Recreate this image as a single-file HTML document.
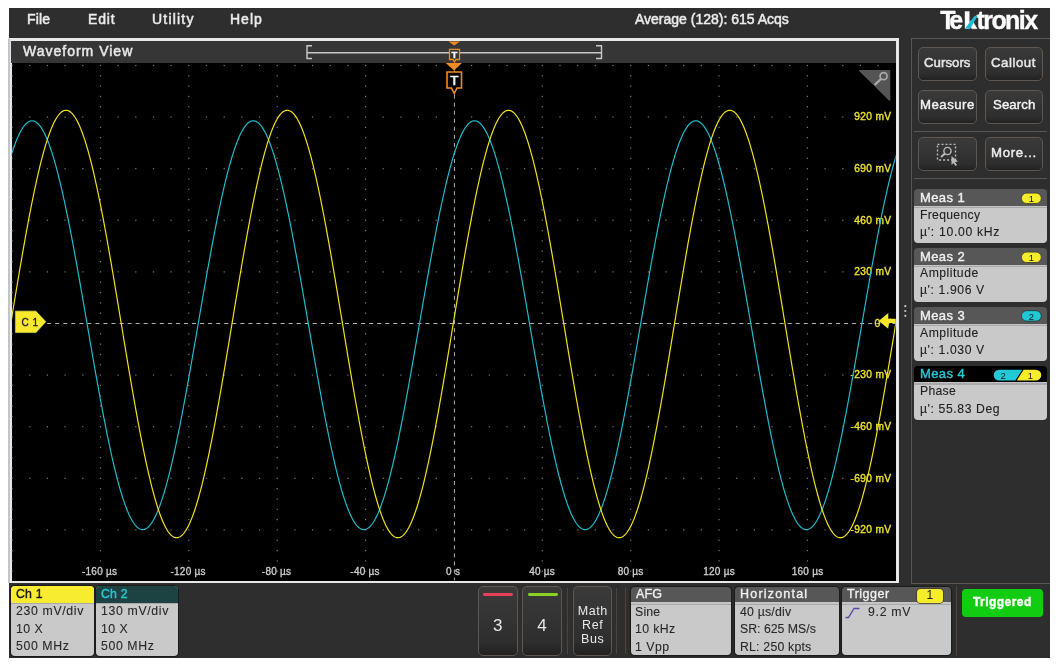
<!DOCTYPE html>
<html><head><meta charset="utf-8">
<style>
*{margin:0;padding:0;box-sizing:border-box}
html,body{width:1056px;height:667px;overflow:hidden;background:#fff;font-family:"Liberation Sans",sans-serif;-webkit-font-smoothing:antialiased}
.t,svg{will-change:transform}
.a{position:absolute}
.t{position:absolute;white-space:nowrap}
.btn{position:absolute;border:1px solid #5e5650;border-radius:5px;background:linear-gradient(#3a3a3a,#2e2e2e 80%,#222)}
.meas{position:absolute;left:914px;width:133px;border-radius:4px;overflow:hidden;background:linear-gradient(#575757 0,#575757 16.9px,#c4c4c4 16.9px,#c4c4c4 18px,#a9a9a9 18px,#a9a9a9 19.2px,#c9c9c9 19.2px)}
.mh{height:16.9px}
.badge{position:absolute;width:20px;height:10.5px;border-radius:5px;background:#f4ea2a;box-shadow:0 0 0 0.7px #3a3a30;color:#222;font-family:"Liberation Serif",serif;font-size:10px;line-height:11px;text-align:center}
.chb{position:absolute;height:70px;background:#c9c9c9;border-radius:4px;overflow:hidden;box-shadow:0 0 0 1.3px #1c1c1c}
.chh{height:18.1px;border-bottom:1.1px solid #a9a9ac}
.vl{fill:#eee22c;font-size:10.2px;text-anchor:end;stroke:#eee22c;stroke-width:0.35px;letter-spacing:0.35px}
.tl{fill:#d0d0d0;font-size:10px;text-anchor:middle;stroke:#d0d0d0;stroke-width:0.3px;letter-spacing:0.25px}
.sep{position:absolute;background:#4d453c}
</style></head><body>
<div class="a" style="left:9px;top:8px;width:1041px;height:650.4px;background:#2e2e2e"></div>

<!-- waveform panel -->
<div class="a" style="left:8px;top:37.8px;width:891.2px;height:545.4px;background:#e8e8ea"></div>
<div class="a" style="left:8px;top:38.5px;width:1.8px;height:544px;background:#c2c4c8"></div>
<div class="a" style="left:11.2px;top:41px;width:884.5px;height:22px;background:#363636"></div>
<div class="a" style="left:11.5px;top:63px;width:884.2px;height:517.7px;background:#000"></div>

<svg class="a" style="left:0;top:0" width="1056" height="667" viewBox="0 0 1056 667">
<defs><clipPath id="gc"><rect x="11.5" y="63" width="884.2" height="517.3"/></clipPath></defs>
<g stroke="#c8c8c8" stroke-width="1.4" fill="none">
<path d="M312,45.8 H307 V58.5 H312 M307,52.7 H601.5 M596,45.8 H601.5 V58.5 H596"/>
</g>
<path d="M448.5,41.4 L460,41.4 L454.2,45.6 Z" fill="#f08a24"/>
<g stroke="#f08a24" stroke-width="1.3" fill="#333">
<path d="M449.5,49.3 H459.5 V59.5 H456 L454.5,62 L453,59.5 H449.5 Z"/>
</g>
<text x="454.5" y="58.2" font-size="9.5" fill="#f4f4f4" stroke="#f4f4f4" stroke-width="0.4" text-anchor="middle" font-weight="bold">T</text>
<g clip-path="url(#gc)">
<g fill="#7a7a7a"><rect x="11.5" y="64.9" width="1.2" height="1.2"/><rect x="29.2" y="64.9" width="1.2" height="1.2"/><rect x="46.8" y="64.9" width="1.2" height="1.2"/><rect x="64.5" y="64.9" width="1.2" height="1.2"/><rect x="82.2" y="64.9" width="1.2" height="1.2"/><rect x="99.9" y="64.9" width="1.2" height="1.2"/><rect x="117.5" y="64.9" width="1.2" height="1.2"/><rect x="135.2" y="64.9" width="1.2" height="1.2"/><rect x="152.9" y="64.9" width="1.2" height="1.2"/><rect x="170.5" y="64.9" width="1.2" height="1.2"/><rect x="188.2" y="64.9" width="1.2" height="1.2"/><rect x="205.9" y="64.9" width="1.2" height="1.2"/><rect x="223.6" y="64.9" width="1.2" height="1.2"/><rect x="241.2" y="64.9" width="1.2" height="1.2"/><rect x="258.9" y="64.9" width="1.2" height="1.2"/><rect x="276.6" y="64.9" width="1.2" height="1.2"/><rect x="294.3" y="64.9" width="1.2" height="1.2"/><rect x="311.9" y="64.9" width="1.2" height="1.2"/><rect x="329.6" y="64.9" width="1.2" height="1.2"/><rect x="347.3" y="64.9" width="1.2" height="1.2"/><rect x="365.0" y="64.9" width="1.2" height="1.2"/><rect x="382.6" y="64.9" width="1.2" height="1.2"/><rect x="400.3" y="64.9" width="1.2" height="1.2"/><rect x="418.0" y="64.9" width="1.2" height="1.2"/><rect x="435.7" y="64.9" width="1.2" height="1.2"/><rect x="471.0" y="64.9" width="1.2" height="1.2"/><rect x="488.7" y="64.9" width="1.2" height="1.2"/><rect x="506.4" y="64.9" width="1.2" height="1.2"/><rect x="524.0" y="64.9" width="1.2" height="1.2"/><rect x="541.7" y="64.9" width="1.2" height="1.2"/><rect x="559.4" y="64.9" width="1.2" height="1.2"/><rect x="577.1" y="64.9" width="1.2" height="1.2"/><rect x="594.7" y="64.9" width="1.2" height="1.2"/><rect x="612.4" y="64.9" width="1.2" height="1.2"/><rect x="630.1" y="64.9" width="1.2" height="1.2"/><rect x="647.8" y="64.9" width="1.2" height="1.2"/><rect x="665.4" y="64.9" width="1.2" height="1.2"/><rect x="683.1" y="64.9" width="1.2" height="1.2"/><rect x="700.8" y="64.9" width="1.2" height="1.2"/><rect x="718.5" y="64.9" width="1.2" height="1.2"/><rect x="736.1" y="64.9" width="1.2" height="1.2"/><rect x="753.8" y="64.9" width="1.2" height="1.2"/><rect x="771.5" y="64.9" width="1.2" height="1.2"/><rect x="789.2" y="64.9" width="1.2" height="1.2"/><rect x="806.8" y="64.9" width="1.2" height="1.2"/><rect x="824.5" y="64.9" width="1.2" height="1.2"/><rect x="842.2" y="64.9" width="1.2" height="1.2"/><rect x="859.9" y="64.9" width="1.2" height="1.2"/><rect x="877.5" y="64.9" width="1.2" height="1.2"/><rect x="11.5" y="116.5" width="1.2" height="1.2"/><rect x="29.2" y="116.5" width="1.2" height="1.2"/><rect x="46.8" y="116.5" width="1.2" height="1.2"/><rect x="64.5" y="116.5" width="1.2" height="1.2"/><rect x="82.2" y="116.5" width="1.2" height="1.2"/><rect x="99.9" y="116.5" width="1.2" height="1.2"/><rect x="117.5" y="116.5" width="1.2" height="1.2"/><rect x="135.2" y="116.5" width="1.2" height="1.2"/><rect x="152.9" y="116.5" width="1.2" height="1.2"/><rect x="170.5" y="116.5" width="1.2" height="1.2"/><rect x="188.2" y="116.5" width="1.2" height="1.2"/><rect x="205.9" y="116.5" width="1.2" height="1.2"/><rect x="223.6" y="116.5" width="1.2" height="1.2"/><rect x="241.2" y="116.5" width="1.2" height="1.2"/><rect x="258.9" y="116.5" width="1.2" height="1.2"/><rect x="276.6" y="116.5" width="1.2" height="1.2"/><rect x="294.3" y="116.5" width="1.2" height="1.2"/><rect x="311.9" y="116.5" width="1.2" height="1.2"/><rect x="329.6" y="116.5" width="1.2" height="1.2"/><rect x="347.3" y="116.5" width="1.2" height="1.2"/><rect x="365.0" y="116.5" width="1.2" height="1.2"/><rect x="382.6" y="116.5" width="1.2" height="1.2"/><rect x="400.3" y="116.5" width="1.2" height="1.2"/><rect x="418.0" y="116.5" width="1.2" height="1.2"/><rect x="435.7" y="116.5" width="1.2" height="1.2"/><rect x="471.0" y="116.5" width="1.2" height="1.2"/><rect x="488.7" y="116.5" width="1.2" height="1.2"/><rect x="506.4" y="116.5" width="1.2" height="1.2"/><rect x="524.0" y="116.5" width="1.2" height="1.2"/><rect x="541.7" y="116.5" width="1.2" height="1.2"/><rect x="559.4" y="116.5" width="1.2" height="1.2"/><rect x="577.1" y="116.5" width="1.2" height="1.2"/><rect x="594.7" y="116.5" width="1.2" height="1.2"/><rect x="612.4" y="116.5" width="1.2" height="1.2"/><rect x="630.1" y="116.5" width="1.2" height="1.2"/><rect x="647.8" y="116.5" width="1.2" height="1.2"/><rect x="665.4" y="116.5" width="1.2" height="1.2"/><rect x="683.1" y="116.5" width="1.2" height="1.2"/><rect x="700.8" y="116.5" width="1.2" height="1.2"/><rect x="718.5" y="116.5" width="1.2" height="1.2"/><rect x="736.1" y="116.5" width="1.2" height="1.2"/><rect x="753.8" y="116.5" width="1.2" height="1.2"/><rect x="771.5" y="116.5" width="1.2" height="1.2"/><rect x="789.2" y="116.5" width="1.2" height="1.2"/><rect x="806.8" y="116.5" width="1.2" height="1.2"/><rect x="824.5" y="116.5" width="1.2" height="1.2"/><rect x="842.2" y="116.5" width="1.2" height="1.2"/><rect x="859.9" y="116.5" width="1.2" height="1.2"/><rect x="877.5" y="116.5" width="1.2" height="1.2"/><rect x="11.5" y="168.1" width="1.2" height="1.2"/><rect x="29.2" y="168.1" width="1.2" height="1.2"/><rect x="46.8" y="168.1" width="1.2" height="1.2"/><rect x="64.5" y="168.1" width="1.2" height="1.2"/><rect x="82.2" y="168.1" width="1.2" height="1.2"/><rect x="99.9" y="168.1" width="1.2" height="1.2"/><rect x="117.5" y="168.1" width="1.2" height="1.2"/><rect x="135.2" y="168.1" width="1.2" height="1.2"/><rect x="152.9" y="168.1" width="1.2" height="1.2"/><rect x="170.5" y="168.1" width="1.2" height="1.2"/><rect x="188.2" y="168.1" width="1.2" height="1.2"/><rect x="205.9" y="168.1" width="1.2" height="1.2"/><rect x="223.6" y="168.1" width="1.2" height="1.2"/><rect x="241.2" y="168.1" width="1.2" height="1.2"/><rect x="258.9" y="168.1" width="1.2" height="1.2"/><rect x="276.6" y="168.1" width="1.2" height="1.2"/><rect x="294.3" y="168.1" width="1.2" height="1.2"/><rect x="311.9" y="168.1" width="1.2" height="1.2"/><rect x="329.6" y="168.1" width="1.2" height="1.2"/><rect x="347.3" y="168.1" width="1.2" height="1.2"/><rect x="365.0" y="168.1" width="1.2" height="1.2"/><rect x="382.6" y="168.1" width="1.2" height="1.2"/><rect x="400.3" y="168.1" width="1.2" height="1.2"/><rect x="418.0" y="168.1" width="1.2" height="1.2"/><rect x="435.7" y="168.1" width="1.2" height="1.2"/><rect x="471.0" y="168.1" width="1.2" height="1.2"/><rect x="488.7" y="168.1" width="1.2" height="1.2"/><rect x="506.4" y="168.1" width="1.2" height="1.2"/><rect x="524.0" y="168.1" width="1.2" height="1.2"/><rect x="541.7" y="168.1" width="1.2" height="1.2"/><rect x="559.4" y="168.1" width="1.2" height="1.2"/><rect x="577.1" y="168.1" width="1.2" height="1.2"/><rect x="594.7" y="168.1" width="1.2" height="1.2"/><rect x="612.4" y="168.1" width="1.2" height="1.2"/><rect x="630.1" y="168.1" width="1.2" height="1.2"/><rect x="647.8" y="168.1" width="1.2" height="1.2"/><rect x="665.4" y="168.1" width="1.2" height="1.2"/><rect x="683.1" y="168.1" width="1.2" height="1.2"/><rect x="700.8" y="168.1" width="1.2" height="1.2"/><rect x="718.5" y="168.1" width="1.2" height="1.2"/><rect x="736.1" y="168.1" width="1.2" height="1.2"/><rect x="753.8" y="168.1" width="1.2" height="1.2"/><rect x="771.5" y="168.1" width="1.2" height="1.2"/><rect x="789.2" y="168.1" width="1.2" height="1.2"/><rect x="806.8" y="168.1" width="1.2" height="1.2"/><rect x="824.5" y="168.1" width="1.2" height="1.2"/><rect x="842.2" y="168.1" width="1.2" height="1.2"/><rect x="859.9" y="168.1" width="1.2" height="1.2"/><rect x="877.5" y="168.1" width="1.2" height="1.2"/><rect x="11.5" y="219.7" width="1.2" height="1.2"/><rect x="29.2" y="219.7" width="1.2" height="1.2"/><rect x="46.8" y="219.7" width="1.2" height="1.2"/><rect x="64.5" y="219.7" width="1.2" height="1.2"/><rect x="82.2" y="219.7" width="1.2" height="1.2"/><rect x="99.9" y="219.7" width="1.2" height="1.2"/><rect x="117.5" y="219.7" width="1.2" height="1.2"/><rect x="135.2" y="219.7" width="1.2" height="1.2"/><rect x="152.9" y="219.7" width="1.2" height="1.2"/><rect x="170.5" y="219.7" width="1.2" height="1.2"/><rect x="188.2" y="219.7" width="1.2" height="1.2"/><rect x="205.9" y="219.7" width="1.2" height="1.2"/><rect x="223.6" y="219.7" width="1.2" height="1.2"/><rect x="241.2" y="219.7" width="1.2" height="1.2"/><rect x="258.9" y="219.7" width="1.2" height="1.2"/><rect x="276.6" y="219.7" width="1.2" height="1.2"/><rect x="294.3" y="219.7" width="1.2" height="1.2"/><rect x="311.9" y="219.7" width="1.2" height="1.2"/><rect x="329.6" y="219.7" width="1.2" height="1.2"/><rect x="347.3" y="219.7" width="1.2" height="1.2"/><rect x="365.0" y="219.7" width="1.2" height="1.2"/><rect x="382.6" y="219.7" width="1.2" height="1.2"/><rect x="400.3" y="219.7" width="1.2" height="1.2"/><rect x="418.0" y="219.7" width="1.2" height="1.2"/><rect x="435.7" y="219.7" width="1.2" height="1.2"/><rect x="471.0" y="219.7" width="1.2" height="1.2"/><rect x="488.7" y="219.7" width="1.2" height="1.2"/><rect x="506.4" y="219.7" width="1.2" height="1.2"/><rect x="524.0" y="219.7" width="1.2" height="1.2"/><rect x="541.7" y="219.7" width="1.2" height="1.2"/><rect x="559.4" y="219.7" width="1.2" height="1.2"/><rect x="577.1" y="219.7" width="1.2" height="1.2"/><rect x="594.7" y="219.7" width="1.2" height="1.2"/><rect x="612.4" y="219.7" width="1.2" height="1.2"/><rect x="630.1" y="219.7" width="1.2" height="1.2"/><rect x="647.8" y="219.7" width="1.2" height="1.2"/><rect x="665.4" y="219.7" width="1.2" height="1.2"/><rect x="683.1" y="219.7" width="1.2" height="1.2"/><rect x="700.8" y="219.7" width="1.2" height="1.2"/><rect x="718.5" y="219.7" width="1.2" height="1.2"/><rect x="736.1" y="219.7" width="1.2" height="1.2"/><rect x="753.8" y="219.7" width="1.2" height="1.2"/><rect x="771.5" y="219.7" width="1.2" height="1.2"/><rect x="789.2" y="219.7" width="1.2" height="1.2"/><rect x="806.8" y="219.7" width="1.2" height="1.2"/><rect x="824.5" y="219.7" width="1.2" height="1.2"/><rect x="842.2" y="219.7" width="1.2" height="1.2"/><rect x="859.9" y="219.7" width="1.2" height="1.2"/><rect x="877.5" y="219.7" width="1.2" height="1.2"/><rect x="11.5" y="271.3" width="1.2" height="1.2"/><rect x="29.2" y="271.3" width="1.2" height="1.2"/><rect x="46.8" y="271.3" width="1.2" height="1.2"/><rect x="64.5" y="271.3" width="1.2" height="1.2"/><rect x="82.2" y="271.3" width="1.2" height="1.2"/><rect x="99.9" y="271.3" width="1.2" height="1.2"/><rect x="117.5" y="271.3" width="1.2" height="1.2"/><rect x="135.2" y="271.3" width="1.2" height="1.2"/><rect x="152.9" y="271.3" width="1.2" height="1.2"/><rect x="170.5" y="271.3" width="1.2" height="1.2"/><rect x="188.2" y="271.3" width="1.2" height="1.2"/><rect x="205.9" y="271.3" width="1.2" height="1.2"/><rect x="223.6" y="271.3" width="1.2" height="1.2"/><rect x="241.2" y="271.3" width="1.2" height="1.2"/><rect x="258.9" y="271.3" width="1.2" height="1.2"/><rect x="276.6" y="271.3" width="1.2" height="1.2"/><rect x="294.3" y="271.3" width="1.2" height="1.2"/><rect x="311.9" y="271.3" width="1.2" height="1.2"/><rect x="329.6" y="271.3" width="1.2" height="1.2"/><rect x="347.3" y="271.3" width="1.2" height="1.2"/><rect x="365.0" y="271.3" width="1.2" height="1.2"/><rect x="382.6" y="271.3" width="1.2" height="1.2"/><rect x="400.3" y="271.3" width="1.2" height="1.2"/><rect x="418.0" y="271.3" width="1.2" height="1.2"/><rect x="435.7" y="271.3" width="1.2" height="1.2"/><rect x="471.0" y="271.3" width="1.2" height="1.2"/><rect x="488.7" y="271.3" width="1.2" height="1.2"/><rect x="506.4" y="271.3" width="1.2" height="1.2"/><rect x="524.0" y="271.3" width="1.2" height="1.2"/><rect x="541.7" y="271.3" width="1.2" height="1.2"/><rect x="559.4" y="271.3" width="1.2" height="1.2"/><rect x="577.1" y="271.3" width="1.2" height="1.2"/><rect x="594.7" y="271.3" width="1.2" height="1.2"/><rect x="612.4" y="271.3" width="1.2" height="1.2"/><rect x="630.1" y="271.3" width="1.2" height="1.2"/><rect x="647.8" y="271.3" width="1.2" height="1.2"/><rect x="665.4" y="271.3" width="1.2" height="1.2"/><rect x="683.1" y="271.3" width="1.2" height="1.2"/><rect x="700.8" y="271.3" width="1.2" height="1.2"/><rect x="718.5" y="271.3" width="1.2" height="1.2"/><rect x="736.1" y="271.3" width="1.2" height="1.2"/><rect x="753.8" y="271.3" width="1.2" height="1.2"/><rect x="771.5" y="271.3" width="1.2" height="1.2"/><rect x="789.2" y="271.3" width="1.2" height="1.2"/><rect x="806.8" y="271.3" width="1.2" height="1.2"/><rect x="824.5" y="271.3" width="1.2" height="1.2"/><rect x="842.2" y="271.3" width="1.2" height="1.2"/><rect x="859.9" y="271.3" width="1.2" height="1.2"/><rect x="877.5" y="271.3" width="1.2" height="1.2"/><rect x="11.5" y="374.5" width="1.2" height="1.2"/><rect x="29.2" y="374.5" width="1.2" height="1.2"/><rect x="46.8" y="374.5" width="1.2" height="1.2"/><rect x="64.5" y="374.5" width="1.2" height="1.2"/><rect x="82.2" y="374.5" width="1.2" height="1.2"/><rect x="99.9" y="374.5" width="1.2" height="1.2"/><rect x="117.5" y="374.5" width="1.2" height="1.2"/><rect x="135.2" y="374.5" width="1.2" height="1.2"/><rect x="152.9" y="374.5" width="1.2" height="1.2"/><rect x="170.5" y="374.5" width="1.2" height="1.2"/><rect x="188.2" y="374.5" width="1.2" height="1.2"/><rect x="205.9" y="374.5" width="1.2" height="1.2"/><rect x="223.6" y="374.5" width="1.2" height="1.2"/><rect x="241.2" y="374.5" width="1.2" height="1.2"/><rect x="258.9" y="374.5" width="1.2" height="1.2"/><rect x="276.6" y="374.5" width="1.2" height="1.2"/><rect x="294.3" y="374.5" width="1.2" height="1.2"/><rect x="311.9" y="374.5" width="1.2" height="1.2"/><rect x="329.6" y="374.5" width="1.2" height="1.2"/><rect x="347.3" y="374.5" width="1.2" height="1.2"/><rect x="365.0" y="374.5" width="1.2" height="1.2"/><rect x="382.6" y="374.5" width="1.2" height="1.2"/><rect x="400.3" y="374.5" width="1.2" height="1.2"/><rect x="418.0" y="374.5" width="1.2" height="1.2"/><rect x="435.7" y="374.5" width="1.2" height="1.2"/><rect x="471.0" y="374.5" width="1.2" height="1.2"/><rect x="488.7" y="374.5" width="1.2" height="1.2"/><rect x="506.4" y="374.5" width="1.2" height="1.2"/><rect x="524.0" y="374.5" width="1.2" height="1.2"/><rect x="541.7" y="374.5" width="1.2" height="1.2"/><rect x="559.4" y="374.5" width="1.2" height="1.2"/><rect x="577.1" y="374.5" width="1.2" height="1.2"/><rect x="594.7" y="374.5" width="1.2" height="1.2"/><rect x="612.4" y="374.5" width="1.2" height="1.2"/><rect x="630.1" y="374.5" width="1.2" height="1.2"/><rect x="647.8" y="374.5" width="1.2" height="1.2"/><rect x="665.4" y="374.5" width="1.2" height="1.2"/><rect x="683.1" y="374.5" width="1.2" height="1.2"/><rect x="700.8" y="374.5" width="1.2" height="1.2"/><rect x="718.5" y="374.5" width="1.2" height="1.2"/><rect x="736.1" y="374.5" width="1.2" height="1.2"/><rect x="753.8" y="374.5" width="1.2" height="1.2"/><rect x="771.5" y="374.5" width="1.2" height="1.2"/><rect x="789.2" y="374.5" width="1.2" height="1.2"/><rect x="806.8" y="374.5" width="1.2" height="1.2"/><rect x="824.5" y="374.5" width="1.2" height="1.2"/><rect x="842.2" y="374.5" width="1.2" height="1.2"/><rect x="859.9" y="374.5" width="1.2" height="1.2"/><rect x="877.5" y="374.5" width="1.2" height="1.2"/><rect x="11.5" y="426.1" width="1.2" height="1.2"/><rect x="29.2" y="426.1" width="1.2" height="1.2"/><rect x="46.8" y="426.1" width="1.2" height="1.2"/><rect x="64.5" y="426.1" width="1.2" height="1.2"/><rect x="82.2" y="426.1" width="1.2" height="1.2"/><rect x="99.9" y="426.1" width="1.2" height="1.2"/><rect x="117.5" y="426.1" width="1.2" height="1.2"/><rect x="135.2" y="426.1" width="1.2" height="1.2"/><rect x="152.9" y="426.1" width="1.2" height="1.2"/><rect x="170.5" y="426.1" width="1.2" height="1.2"/><rect x="188.2" y="426.1" width="1.2" height="1.2"/><rect x="205.9" y="426.1" width="1.2" height="1.2"/><rect x="223.6" y="426.1" width="1.2" height="1.2"/><rect x="241.2" y="426.1" width="1.2" height="1.2"/><rect x="258.9" y="426.1" width="1.2" height="1.2"/><rect x="276.6" y="426.1" width="1.2" height="1.2"/><rect x="294.3" y="426.1" width="1.2" height="1.2"/><rect x="311.9" y="426.1" width="1.2" height="1.2"/><rect x="329.6" y="426.1" width="1.2" height="1.2"/><rect x="347.3" y="426.1" width="1.2" height="1.2"/><rect x="365.0" y="426.1" width="1.2" height="1.2"/><rect x="382.6" y="426.1" width="1.2" height="1.2"/><rect x="400.3" y="426.1" width="1.2" height="1.2"/><rect x="418.0" y="426.1" width="1.2" height="1.2"/><rect x="435.7" y="426.1" width="1.2" height="1.2"/><rect x="471.0" y="426.1" width="1.2" height="1.2"/><rect x="488.7" y="426.1" width="1.2" height="1.2"/><rect x="506.4" y="426.1" width="1.2" height="1.2"/><rect x="524.0" y="426.1" width="1.2" height="1.2"/><rect x="541.7" y="426.1" width="1.2" height="1.2"/><rect x="559.4" y="426.1" width="1.2" height="1.2"/><rect x="577.1" y="426.1" width="1.2" height="1.2"/><rect x="594.7" y="426.1" width="1.2" height="1.2"/><rect x="612.4" y="426.1" width="1.2" height="1.2"/><rect x="630.1" y="426.1" width="1.2" height="1.2"/><rect x="647.8" y="426.1" width="1.2" height="1.2"/><rect x="665.4" y="426.1" width="1.2" height="1.2"/><rect x="683.1" y="426.1" width="1.2" height="1.2"/><rect x="700.8" y="426.1" width="1.2" height="1.2"/><rect x="718.5" y="426.1" width="1.2" height="1.2"/><rect x="736.1" y="426.1" width="1.2" height="1.2"/><rect x="753.8" y="426.1" width="1.2" height="1.2"/><rect x="771.5" y="426.1" width="1.2" height="1.2"/><rect x="789.2" y="426.1" width="1.2" height="1.2"/><rect x="806.8" y="426.1" width="1.2" height="1.2"/><rect x="824.5" y="426.1" width="1.2" height="1.2"/><rect x="842.2" y="426.1" width="1.2" height="1.2"/><rect x="859.9" y="426.1" width="1.2" height="1.2"/><rect x="877.5" y="426.1" width="1.2" height="1.2"/><rect x="11.5" y="477.7" width="1.2" height="1.2"/><rect x="29.2" y="477.7" width="1.2" height="1.2"/><rect x="46.8" y="477.7" width="1.2" height="1.2"/><rect x="64.5" y="477.7" width="1.2" height="1.2"/><rect x="82.2" y="477.7" width="1.2" height="1.2"/><rect x="99.9" y="477.7" width="1.2" height="1.2"/><rect x="117.5" y="477.7" width="1.2" height="1.2"/><rect x="135.2" y="477.7" width="1.2" height="1.2"/><rect x="152.9" y="477.7" width="1.2" height="1.2"/><rect x="170.5" y="477.7" width="1.2" height="1.2"/><rect x="188.2" y="477.7" width="1.2" height="1.2"/><rect x="205.9" y="477.7" width="1.2" height="1.2"/><rect x="223.6" y="477.7" width="1.2" height="1.2"/><rect x="241.2" y="477.7" width="1.2" height="1.2"/><rect x="258.9" y="477.7" width="1.2" height="1.2"/><rect x="276.6" y="477.7" width="1.2" height="1.2"/><rect x="294.3" y="477.7" width="1.2" height="1.2"/><rect x="311.9" y="477.7" width="1.2" height="1.2"/><rect x="329.6" y="477.7" width="1.2" height="1.2"/><rect x="347.3" y="477.7" width="1.2" height="1.2"/><rect x="365.0" y="477.7" width="1.2" height="1.2"/><rect x="382.6" y="477.7" width="1.2" height="1.2"/><rect x="400.3" y="477.7" width="1.2" height="1.2"/><rect x="418.0" y="477.7" width="1.2" height="1.2"/><rect x="435.7" y="477.7" width="1.2" height="1.2"/><rect x="471.0" y="477.7" width="1.2" height="1.2"/><rect x="488.7" y="477.7" width="1.2" height="1.2"/><rect x="506.4" y="477.7" width="1.2" height="1.2"/><rect x="524.0" y="477.7" width="1.2" height="1.2"/><rect x="541.7" y="477.7" width="1.2" height="1.2"/><rect x="559.4" y="477.7" width="1.2" height="1.2"/><rect x="577.1" y="477.7" width="1.2" height="1.2"/><rect x="594.7" y="477.7" width="1.2" height="1.2"/><rect x="612.4" y="477.7" width="1.2" height="1.2"/><rect x="630.1" y="477.7" width="1.2" height="1.2"/><rect x="647.8" y="477.7" width="1.2" height="1.2"/><rect x="665.4" y="477.7" width="1.2" height="1.2"/><rect x="683.1" y="477.7" width="1.2" height="1.2"/><rect x="700.8" y="477.7" width="1.2" height="1.2"/><rect x="718.5" y="477.7" width="1.2" height="1.2"/><rect x="736.1" y="477.7" width="1.2" height="1.2"/><rect x="753.8" y="477.7" width="1.2" height="1.2"/><rect x="771.5" y="477.7" width="1.2" height="1.2"/><rect x="789.2" y="477.7" width="1.2" height="1.2"/><rect x="806.8" y="477.7" width="1.2" height="1.2"/><rect x="824.5" y="477.7" width="1.2" height="1.2"/><rect x="842.2" y="477.7" width="1.2" height="1.2"/><rect x="859.9" y="477.7" width="1.2" height="1.2"/><rect x="877.5" y="477.7" width="1.2" height="1.2"/><rect x="11.5" y="529.3" width="1.2" height="1.2"/><rect x="29.2" y="529.3" width="1.2" height="1.2"/><rect x="46.8" y="529.3" width="1.2" height="1.2"/><rect x="64.5" y="529.3" width="1.2" height="1.2"/><rect x="82.2" y="529.3" width="1.2" height="1.2"/><rect x="99.9" y="529.3" width="1.2" height="1.2"/><rect x="117.5" y="529.3" width="1.2" height="1.2"/><rect x="135.2" y="529.3" width="1.2" height="1.2"/><rect x="152.9" y="529.3" width="1.2" height="1.2"/><rect x="170.5" y="529.3" width="1.2" height="1.2"/><rect x="188.2" y="529.3" width="1.2" height="1.2"/><rect x="205.9" y="529.3" width="1.2" height="1.2"/><rect x="223.6" y="529.3" width="1.2" height="1.2"/><rect x="241.2" y="529.3" width="1.2" height="1.2"/><rect x="258.9" y="529.3" width="1.2" height="1.2"/><rect x="276.6" y="529.3" width="1.2" height="1.2"/><rect x="294.3" y="529.3" width="1.2" height="1.2"/><rect x="311.9" y="529.3" width="1.2" height="1.2"/><rect x="329.6" y="529.3" width="1.2" height="1.2"/><rect x="347.3" y="529.3" width="1.2" height="1.2"/><rect x="365.0" y="529.3" width="1.2" height="1.2"/><rect x="382.6" y="529.3" width="1.2" height="1.2"/><rect x="400.3" y="529.3" width="1.2" height="1.2"/><rect x="418.0" y="529.3" width="1.2" height="1.2"/><rect x="435.7" y="529.3" width="1.2" height="1.2"/><rect x="471.0" y="529.3" width="1.2" height="1.2"/><rect x="488.7" y="529.3" width="1.2" height="1.2"/><rect x="506.4" y="529.3" width="1.2" height="1.2"/><rect x="524.0" y="529.3" width="1.2" height="1.2"/><rect x="541.7" y="529.3" width="1.2" height="1.2"/><rect x="559.4" y="529.3" width="1.2" height="1.2"/><rect x="577.1" y="529.3" width="1.2" height="1.2"/><rect x="594.7" y="529.3" width="1.2" height="1.2"/><rect x="612.4" y="529.3" width="1.2" height="1.2"/><rect x="630.1" y="529.3" width="1.2" height="1.2"/><rect x="647.8" y="529.3" width="1.2" height="1.2"/><rect x="665.4" y="529.3" width="1.2" height="1.2"/><rect x="683.1" y="529.3" width="1.2" height="1.2"/><rect x="700.8" y="529.3" width="1.2" height="1.2"/><rect x="718.5" y="529.3" width="1.2" height="1.2"/><rect x="736.1" y="529.3" width="1.2" height="1.2"/><rect x="753.8" y="529.3" width="1.2" height="1.2"/><rect x="771.5" y="529.3" width="1.2" height="1.2"/><rect x="789.2" y="529.3" width="1.2" height="1.2"/><rect x="806.8" y="529.3" width="1.2" height="1.2"/><rect x="824.5" y="529.3" width="1.2" height="1.2"/><rect x="842.2" y="529.3" width="1.2" height="1.2"/><rect x="859.9" y="529.3" width="1.2" height="1.2"/><rect x="877.5" y="529.3" width="1.2" height="1.2"/><rect x="11.5" y="580.9" width="1.2" height="1.2"/><rect x="29.2" y="580.9" width="1.2" height="1.2"/><rect x="46.8" y="580.9" width="1.2" height="1.2"/><rect x="64.5" y="580.9" width="1.2" height="1.2"/><rect x="82.2" y="580.9" width="1.2" height="1.2"/><rect x="99.9" y="580.9" width="1.2" height="1.2"/><rect x="117.5" y="580.9" width="1.2" height="1.2"/><rect x="135.2" y="580.9" width="1.2" height="1.2"/><rect x="152.9" y="580.9" width="1.2" height="1.2"/><rect x="170.5" y="580.9" width="1.2" height="1.2"/><rect x="188.2" y="580.9" width="1.2" height="1.2"/><rect x="205.9" y="580.9" width="1.2" height="1.2"/><rect x="223.6" y="580.9" width="1.2" height="1.2"/><rect x="241.2" y="580.9" width="1.2" height="1.2"/><rect x="258.9" y="580.9" width="1.2" height="1.2"/><rect x="276.6" y="580.9" width="1.2" height="1.2"/><rect x="294.3" y="580.9" width="1.2" height="1.2"/><rect x="311.9" y="580.9" width="1.2" height="1.2"/><rect x="329.6" y="580.9" width="1.2" height="1.2"/><rect x="347.3" y="580.9" width="1.2" height="1.2"/><rect x="365.0" y="580.9" width="1.2" height="1.2"/><rect x="382.6" y="580.9" width="1.2" height="1.2"/><rect x="400.3" y="580.9" width="1.2" height="1.2"/><rect x="418.0" y="580.9" width="1.2" height="1.2"/><rect x="435.7" y="580.9" width="1.2" height="1.2"/><rect x="471.0" y="580.9" width="1.2" height="1.2"/><rect x="488.7" y="580.9" width="1.2" height="1.2"/><rect x="506.4" y="580.9" width="1.2" height="1.2"/><rect x="524.0" y="580.9" width="1.2" height="1.2"/><rect x="541.7" y="580.9" width="1.2" height="1.2"/><rect x="559.4" y="580.9" width="1.2" height="1.2"/><rect x="577.1" y="580.9" width="1.2" height="1.2"/><rect x="594.7" y="580.9" width="1.2" height="1.2"/><rect x="612.4" y="580.9" width="1.2" height="1.2"/><rect x="630.1" y="580.9" width="1.2" height="1.2"/><rect x="647.8" y="580.9" width="1.2" height="1.2"/><rect x="665.4" y="580.9" width="1.2" height="1.2"/><rect x="683.1" y="580.9" width="1.2" height="1.2"/><rect x="700.8" y="580.9" width="1.2" height="1.2"/><rect x="718.5" y="580.9" width="1.2" height="1.2"/><rect x="736.1" y="580.9" width="1.2" height="1.2"/><rect x="753.8" y="580.9" width="1.2" height="1.2"/><rect x="771.5" y="580.9" width="1.2" height="1.2"/><rect x="789.2" y="580.9" width="1.2" height="1.2"/><rect x="806.8" y="580.9" width="1.2" height="1.2"/><rect x="824.5" y="580.9" width="1.2" height="1.2"/><rect x="842.2" y="580.9" width="1.2" height="1.2"/><rect x="859.9" y="580.9" width="1.2" height="1.2"/><rect x="877.5" y="580.9" width="1.2" height="1.2"/><rect x="11.5" y="75.2" width="1.2" height="1.2"/><rect x="11.5" y="85.5" width="1.2" height="1.2"/><rect x="11.5" y="95.8" width="1.2" height="1.2"/><rect x="11.5" y="106.1" width="1.2" height="1.2"/><rect x="11.5" y="126.8" width="1.2" height="1.2"/><rect x="11.5" y="137.1" width="1.2" height="1.2"/><rect x="11.5" y="147.4" width="1.2" height="1.2"/><rect x="11.5" y="157.7" width="1.2" height="1.2"/><rect x="11.5" y="178.4" width="1.2" height="1.2"/><rect x="11.5" y="188.7" width="1.2" height="1.2"/><rect x="11.5" y="199.0" width="1.2" height="1.2"/><rect x="11.5" y="209.4" width="1.2" height="1.2"/><rect x="11.5" y="230.0" width="1.2" height="1.2"/><rect x="11.5" y="240.3" width="1.2" height="1.2"/><rect x="11.5" y="250.6" width="1.2" height="1.2"/><rect x="11.5" y="261.0" width="1.2" height="1.2"/><rect x="11.5" y="281.6" width="1.2" height="1.2"/><rect x="11.5" y="291.9" width="1.2" height="1.2"/><rect x="11.5" y="302.3" width="1.2" height="1.2"/><rect x="11.5" y="312.6" width="1.2" height="1.2"/><rect x="11.5" y="333.2" width="1.2" height="1.2"/><rect x="11.5" y="343.5" width="1.2" height="1.2"/><rect x="11.5" y="353.9" width="1.2" height="1.2"/><rect x="11.5" y="364.2" width="1.2" height="1.2"/><rect x="11.5" y="384.8" width="1.2" height="1.2"/><rect x="11.5" y="395.2" width="1.2" height="1.2"/><rect x="11.5" y="405.5" width="1.2" height="1.2"/><rect x="11.5" y="415.8" width="1.2" height="1.2"/><rect x="11.5" y="436.4" width="1.2" height="1.2"/><rect x="11.5" y="446.8" width="1.2" height="1.2"/><rect x="11.5" y="457.1" width="1.2" height="1.2"/><rect x="11.5" y="467.4" width="1.2" height="1.2"/><rect x="11.5" y="488.1" width="1.2" height="1.2"/><rect x="11.5" y="498.4" width="1.2" height="1.2"/><rect x="11.5" y="508.7" width="1.2" height="1.2"/><rect x="11.5" y="519.0" width="1.2" height="1.2"/><rect x="11.5" y="539.7" width="1.2" height="1.2"/><rect x="11.5" y="550.0" width="1.2" height="1.2"/><rect x="11.5" y="560.3" width="1.2" height="1.2"/><rect x="11.5" y="570.6" width="1.2" height="1.2"/><rect x="99.9" y="75.2" width="1.2" height="1.2"/><rect x="99.9" y="85.5" width="1.2" height="1.2"/><rect x="99.9" y="95.8" width="1.2" height="1.2"/><rect x="99.9" y="106.1" width="1.2" height="1.2"/><rect x="99.9" y="126.8" width="1.2" height="1.2"/><rect x="99.9" y="137.1" width="1.2" height="1.2"/><rect x="99.9" y="147.4" width="1.2" height="1.2"/><rect x="99.9" y="157.7" width="1.2" height="1.2"/><rect x="99.9" y="178.4" width="1.2" height="1.2"/><rect x="99.9" y="188.7" width="1.2" height="1.2"/><rect x="99.9" y="199.0" width="1.2" height="1.2"/><rect x="99.9" y="209.4" width="1.2" height="1.2"/><rect x="99.9" y="230.0" width="1.2" height="1.2"/><rect x="99.9" y="240.3" width="1.2" height="1.2"/><rect x="99.9" y="250.6" width="1.2" height="1.2"/><rect x="99.9" y="261.0" width="1.2" height="1.2"/><rect x="99.9" y="281.6" width="1.2" height="1.2"/><rect x="99.9" y="291.9" width="1.2" height="1.2"/><rect x="99.9" y="302.3" width="1.2" height="1.2"/><rect x="99.9" y="312.6" width="1.2" height="1.2"/><rect x="99.9" y="333.2" width="1.2" height="1.2"/><rect x="99.9" y="343.5" width="1.2" height="1.2"/><rect x="99.9" y="353.9" width="1.2" height="1.2"/><rect x="99.9" y="364.2" width="1.2" height="1.2"/><rect x="99.9" y="384.8" width="1.2" height="1.2"/><rect x="99.9" y="395.2" width="1.2" height="1.2"/><rect x="99.9" y="405.5" width="1.2" height="1.2"/><rect x="99.9" y="415.8" width="1.2" height="1.2"/><rect x="99.9" y="436.4" width="1.2" height="1.2"/><rect x="99.9" y="446.8" width="1.2" height="1.2"/><rect x="99.9" y="457.1" width="1.2" height="1.2"/><rect x="99.9" y="467.4" width="1.2" height="1.2"/><rect x="99.9" y="488.1" width="1.2" height="1.2"/><rect x="99.9" y="498.4" width="1.2" height="1.2"/><rect x="99.9" y="508.7" width="1.2" height="1.2"/><rect x="99.9" y="519.0" width="1.2" height="1.2"/><rect x="99.9" y="539.7" width="1.2" height="1.2"/><rect x="99.9" y="550.0" width="1.2" height="1.2"/><rect x="99.9" y="560.3" width="1.2" height="1.2"/><rect x="99.9" y="570.6" width="1.2" height="1.2"/><rect x="188.2" y="75.2" width="1.2" height="1.2"/><rect x="188.2" y="85.5" width="1.2" height="1.2"/><rect x="188.2" y="95.8" width="1.2" height="1.2"/><rect x="188.2" y="106.1" width="1.2" height="1.2"/><rect x="188.2" y="126.8" width="1.2" height="1.2"/><rect x="188.2" y="137.1" width="1.2" height="1.2"/><rect x="188.2" y="147.4" width="1.2" height="1.2"/><rect x="188.2" y="157.7" width="1.2" height="1.2"/><rect x="188.2" y="178.4" width="1.2" height="1.2"/><rect x="188.2" y="188.7" width="1.2" height="1.2"/><rect x="188.2" y="199.0" width="1.2" height="1.2"/><rect x="188.2" y="209.4" width="1.2" height="1.2"/><rect x="188.2" y="230.0" width="1.2" height="1.2"/><rect x="188.2" y="240.3" width="1.2" height="1.2"/><rect x="188.2" y="250.6" width="1.2" height="1.2"/><rect x="188.2" y="261.0" width="1.2" height="1.2"/><rect x="188.2" y="281.6" width="1.2" height="1.2"/><rect x="188.2" y="291.9" width="1.2" height="1.2"/><rect x="188.2" y="302.3" width="1.2" height="1.2"/><rect x="188.2" y="312.6" width="1.2" height="1.2"/><rect x="188.2" y="333.2" width="1.2" height="1.2"/><rect x="188.2" y="343.5" width="1.2" height="1.2"/><rect x="188.2" y="353.9" width="1.2" height="1.2"/><rect x="188.2" y="364.2" width="1.2" height="1.2"/><rect x="188.2" y="384.8" width="1.2" height="1.2"/><rect x="188.2" y="395.2" width="1.2" height="1.2"/><rect x="188.2" y="405.5" width="1.2" height="1.2"/><rect x="188.2" y="415.8" width="1.2" height="1.2"/><rect x="188.2" y="436.4" width="1.2" height="1.2"/><rect x="188.2" y="446.8" width="1.2" height="1.2"/><rect x="188.2" y="457.1" width="1.2" height="1.2"/><rect x="188.2" y="467.4" width="1.2" height="1.2"/><rect x="188.2" y="488.1" width="1.2" height="1.2"/><rect x="188.2" y="498.4" width="1.2" height="1.2"/><rect x="188.2" y="508.7" width="1.2" height="1.2"/><rect x="188.2" y="519.0" width="1.2" height="1.2"/><rect x="188.2" y="539.7" width="1.2" height="1.2"/><rect x="188.2" y="550.0" width="1.2" height="1.2"/><rect x="188.2" y="560.3" width="1.2" height="1.2"/><rect x="188.2" y="570.6" width="1.2" height="1.2"/><rect x="276.6" y="75.2" width="1.2" height="1.2"/><rect x="276.6" y="85.5" width="1.2" height="1.2"/><rect x="276.6" y="95.8" width="1.2" height="1.2"/><rect x="276.6" y="106.1" width="1.2" height="1.2"/><rect x="276.6" y="126.8" width="1.2" height="1.2"/><rect x="276.6" y="137.1" width="1.2" height="1.2"/><rect x="276.6" y="147.4" width="1.2" height="1.2"/><rect x="276.6" y="157.7" width="1.2" height="1.2"/><rect x="276.6" y="178.4" width="1.2" height="1.2"/><rect x="276.6" y="188.7" width="1.2" height="1.2"/><rect x="276.6" y="199.0" width="1.2" height="1.2"/><rect x="276.6" y="209.4" width="1.2" height="1.2"/><rect x="276.6" y="230.0" width="1.2" height="1.2"/><rect x="276.6" y="240.3" width="1.2" height="1.2"/><rect x="276.6" y="250.6" width="1.2" height="1.2"/><rect x="276.6" y="261.0" width="1.2" height="1.2"/><rect x="276.6" y="281.6" width="1.2" height="1.2"/><rect x="276.6" y="291.9" width="1.2" height="1.2"/><rect x="276.6" y="302.3" width="1.2" height="1.2"/><rect x="276.6" y="312.6" width="1.2" height="1.2"/><rect x="276.6" y="333.2" width="1.2" height="1.2"/><rect x="276.6" y="343.5" width="1.2" height="1.2"/><rect x="276.6" y="353.9" width="1.2" height="1.2"/><rect x="276.6" y="364.2" width="1.2" height="1.2"/><rect x="276.6" y="384.8" width="1.2" height="1.2"/><rect x="276.6" y="395.2" width="1.2" height="1.2"/><rect x="276.6" y="405.5" width="1.2" height="1.2"/><rect x="276.6" y="415.8" width="1.2" height="1.2"/><rect x="276.6" y="436.4" width="1.2" height="1.2"/><rect x="276.6" y="446.8" width="1.2" height="1.2"/><rect x="276.6" y="457.1" width="1.2" height="1.2"/><rect x="276.6" y="467.4" width="1.2" height="1.2"/><rect x="276.6" y="488.1" width="1.2" height="1.2"/><rect x="276.6" y="498.4" width="1.2" height="1.2"/><rect x="276.6" y="508.7" width="1.2" height="1.2"/><rect x="276.6" y="519.0" width="1.2" height="1.2"/><rect x="276.6" y="539.7" width="1.2" height="1.2"/><rect x="276.6" y="550.0" width="1.2" height="1.2"/><rect x="276.6" y="560.3" width="1.2" height="1.2"/><rect x="276.6" y="570.6" width="1.2" height="1.2"/><rect x="365.0" y="75.2" width="1.2" height="1.2"/><rect x="365.0" y="85.5" width="1.2" height="1.2"/><rect x="365.0" y="95.8" width="1.2" height="1.2"/><rect x="365.0" y="106.1" width="1.2" height="1.2"/><rect x="365.0" y="126.8" width="1.2" height="1.2"/><rect x="365.0" y="137.1" width="1.2" height="1.2"/><rect x="365.0" y="147.4" width="1.2" height="1.2"/><rect x="365.0" y="157.7" width="1.2" height="1.2"/><rect x="365.0" y="178.4" width="1.2" height="1.2"/><rect x="365.0" y="188.7" width="1.2" height="1.2"/><rect x="365.0" y="199.0" width="1.2" height="1.2"/><rect x="365.0" y="209.4" width="1.2" height="1.2"/><rect x="365.0" y="230.0" width="1.2" height="1.2"/><rect x="365.0" y="240.3" width="1.2" height="1.2"/><rect x="365.0" y="250.6" width="1.2" height="1.2"/><rect x="365.0" y="261.0" width="1.2" height="1.2"/><rect x="365.0" y="281.6" width="1.2" height="1.2"/><rect x="365.0" y="291.9" width="1.2" height="1.2"/><rect x="365.0" y="302.3" width="1.2" height="1.2"/><rect x="365.0" y="312.6" width="1.2" height="1.2"/><rect x="365.0" y="333.2" width="1.2" height="1.2"/><rect x="365.0" y="343.5" width="1.2" height="1.2"/><rect x="365.0" y="353.9" width="1.2" height="1.2"/><rect x="365.0" y="364.2" width="1.2" height="1.2"/><rect x="365.0" y="384.8" width="1.2" height="1.2"/><rect x="365.0" y="395.2" width="1.2" height="1.2"/><rect x="365.0" y="405.5" width="1.2" height="1.2"/><rect x="365.0" y="415.8" width="1.2" height="1.2"/><rect x="365.0" y="436.4" width="1.2" height="1.2"/><rect x="365.0" y="446.8" width="1.2" height="1.2"/><rect x="365.0" y="457.1" width="1.2" height="1.2"/><rect x="365.0" y="467.4" width="1.2" height="1.2"/><rect x="365.0" y="488.1" width="1.2" height="1.2"/><rect x="365.0" y="498.4" width="1.2" height="1.2"/><rect x="365.0" y="508.7" width="1.2" height="1.2"/><rect x="365.0" y="519.0" width="1.2" height="1.2"/><rect x="365.0" y="539.7" width="1.2" height="1.2"/><rect x="365.0" y="550.0" width="1.2" height="1.2"/><rect x="365.0" y="560.3" width="1.2" height="1.2"/><rect x="365.0" y="570.6" width="1.2" height="1.2"/><rect x="541.7" y="75.2" width="1.2" height="1.2"/><rect x="541.7" y="85.5" width="1.2" height="1.2"/><rect x="541.7" y="95.8" width="1.2" height="1.2"/><rect x="541.7" y="106.1" width="1.2" height="1.2"/><rect x="541.7" y="126.8" width="1.2" height="1.2"/><rect x="541.7" y="137.1" width="1.2" height="1.2"/><rect x="541.7" y="147.4" width="1.2" height="1.2"/><rect x="541.7" y="157.7" width="1.2" height="1.2"/><rect x="541.7" y="178.4" width="1.2" height="1.2"/><rect x="541.7" y="188.7" width="1.2" height="1.2"/><rect x="541.7" y="199.0" width="1.2" height="1.2"/><rect x="541.7" y="209.4" width="1.2" height="1.2"/><rect x="541.7" y="230.0" width="1.2" height="1.2"/><rect x="541.7" y="240.3" width="1.2" height="1.2"/><rect x="541.7" y="250.6" width="1.2" height="1.2"/><rect x="541.7" y="261.0" width="1.2" height="1.2"/><rect x="541.7" y="281.6" width="1.2" height="1.2"/><rect x="541.7" y="291.9" width="1.2" height="1.2"/><rect x="541.7" y="302.3" width="1.2" height="1.2"/><rect x="541.7" y="312.6" width="1.2" height="1.2"/><rect x="541.7" y="333.2" width="1.2" height="1.2"/><rect x="541.7" y="343.5" width="1.2" height="1.2"/><rect x="541.7" y="353.9" width="1.2" height="1.2"/><rect x="541.7" y="364.2" width="1.2" height="1.2"/><rect x="541.7" y="384.8" width="1.2" height="1.2"/><rect x="541.7" y="395.2" width="1.2" height="1.2"/><rect x="541.7" y="405.5" width="1.2" height="1.2"/><rect x="541.7" y="415.8" width="1.2" height="1.2"/><rect x="541.7" y="436.4" width="1.2" height="1.2"/><rect x="541.7" y="446.8" width="1.2" height="1.2"/><rect x="541.7" y="457.1" width="1.2" height="1.2"/><rect x="541.7" y="467.4" width="1.2" height="1.2"/><rect x="541.7" y="488.1" width="1.2" height="1.2"/><rect x="541.7" y="498.4" width="1.2" height="1.2"/><rect x="541.7" y="508.7" width="1.2" height="1.2"/><rect x="541.7" y="519.0" width="1.2" height="1.2"/><rect x="541.7" y="539.7" width="1.2" height="1.2"/><rect x="541.7" y="550.0" width="1.2" height="1.2"/><rect x="541.7" y="560.3" width="1.2" height="1.2"/><rect x="541.7" y="570.6" width="1.2" height="1.2"/><rect x="630.1" y="75.2" width="1.2" height="1.2"/><rect x="630.1" y="85.5" width="1.2" height="1.2"/><rect x="630.1" y="95.8" width="1.2" height="1.2"/><rect x="630.1" y="106.1" width="1.2" height="1.2"/><rect x="630.1" y="126.8" width="1.2" height="1.2"/><rect x="630.1" y="137.1" width="1.2" height="1.2"/><rect x="630.1" y="147.4" width="1.2" height="1.2"/><rect x="630.1" y="157.7" width="1.2" height="1.2"/><rect x="630.1" y="178.4" width="1.2" height="1.2"/><rect x="630.1" y="188.7" width="1.2" height="1.2"/><rect x="630.1" y="199.0" width="1.2" height="1.2"/><rect x="630.1" y="209.4" width="1.2" height="1.2"/><rect x="630.1" y="230.0" width="1.2" height="1.2"/><rect x="630.1" y="240.3" width="1.2" height="1.2"/><rect x="630.1" y="250.6" width="1.2" height="1.2"/><rect x="630.1" y="261.0" width="1.2" height="1.2"/><rect x="630.1" y="281.6" width="1.2" height="1.2"/><rect x="630.1" y="291.9" width="1.2" height="1.2"/><rect x="630.1" y="302.3" width="1.2" height="1.2"/><rect x="630.1" y="312.6" width="1.2" height="1.2"/><rect x="630.1" y="333.2" width="1.2" height="1.2"/><rect x="630.1" y="343.5" width="1.2" height="1.2"/><rect x="630.1" y="353.9" width="1.2" height="1.2"/><rect x="630.1" y="364.2" width="1.2" height="1.2"/><rect x="630.1" y="384.8" width="1.2" height="1.2"/><rect x="630.1" y="395.2" width="1.2" height="1.2"/><rect x="630.1" y="405.5" width="1.2" height="1.2"/><rect x="630.1" y="415.8" width="1.2" height="1.2"/><rect x="630.1" y="436.4" width="1.2" height="1.2"/><rect x="630.1" y="446.8" width="1.2" height="1.2"/><rect x="630.1" y="457.1" width="1.2" height="1.2"/><rect x="630.1" y="467.4" width="1.2" height="1.2"/><rect x="630.1" y="488.1" width="1.2" height="1.2"/><rect x="630.1" y="498.4" width="1.2" height="1.2"/><rect x="630.1" y="508.7" width="1.2" height="1.2"/><rect x="630.1" y="519.0" width="1.2" height="1.2"/><rect x="630.1" y="539.7" width="1.2" height="1.2"/><rect x="630.1" y="550.0" width="1.2" height="1.2"/><rect x="630.1" y="560.3" width="1.2" height="1.2"/><rect x="630.1" y="570.6" width="1.2" height="1.2"/><rect x="718.5" y="75.2" width="1.2" height="1.2"/><rect x="718.5" y="85.5" width="1.2" height="1.2"/><rect x="718.5" y="95.8" width="1.2" height="1.2"/><rect x="718.5" y="106.1" width="1.2" height="1.2"/><rect x="718.5" y="126.8" width="1.2" height="1.2"/><rect x="718.5" y="137.1" width="1.2" height="1.2"/><rect x="718.5" y="147.4" width="1.2" height="1.2"/><rect x="718.5" y="157.7" width="1.2" height="1.2"/><rect x="718.5" y="178.4" width="1.2" height="1.2"/><rect x="718.5" y="188.7" width="1.2" height="1.2"/><rect x="718.5" y="199.0" width="1.2" height="1.2"/><rect x="718.5" y="209.4" width="1.2" height="1.2"/><rect x="718.5" y="230.0" width="1.2" height="1.2"/><rect x="718.5" y="240.3" width="1.2" height="1.2"/><rect x="718.5" y="250.6" width="1.2" height="1.2"/><rect x="718.5" y="261.0" width="1.2" height="1.2"/><rect x="718.5" y="281.6" width="1.2" height="1.2"/><rect x="718.5" y="291.9" width="1.2" height="1.2"/><rect x="718.5" y="302.3" width="1.2" height="1.2"/><rect x="718.5" y="312.6" width="1.2" height="1.2"/><rect x="718.5" y="333.2" width="1.2" height="1.2"/><rect x="718.5" y="343.5" width="1.2" height="1.2"/><rect x="718.5" y="353.9" width="1.2" height="1.2"/><rect x="718.5" y="364.2" width="1.2" height="1.2"/><rect x="718.5" y="384.8" width="1.2" height="1.2"/><rect x="718.5" y="395.2" width="1.2" height="1.2"/><rect x="718.5" y="405.5" width="1.2" height="1.2"/><rect x="718.5" y="415.8" width="1.2" height="1.2"/><rect x="718.5" y="436.4" width="1.2" height="1.2"/><rect x="718.5" y="446.8" width="1.2" height="1.2"/><rect x="718.5" y="457.1" width="1.2" height="1.2"/><rect x="718.5" y="467.4" width="1.2" height="1.2"/><rect x="718.5" y="488.1" width="1.2" height="1.2"/><rect x="718.5" y="498.4" width="1.2" height="1.2"/><rect x="718.5" y="508.7" width="1.2" height="1.2"/><rect x="718.5" y="519.0" width="1.2" height="1.2"/><rect x="718.5" y="539.7" width="1.2" height="1.2"/><rect x="718.5" y="550.0" width="1.2" height="1.2"/><rect x="718.5" y="560.3" width="1.2" height="1.2"/><rect x="718.5" y="570.6" width="1.2" height="1.2"/><rect x="806.8" y="75.2" width="1.2" height="1.2"/><rect x="806.8" y="85.5" width="1.2" height="1.2"/><rect x="806.8" y="95.8" width="1.2" height="1.2"/><rect x="806.8" y="106.1" width="1.2" height="1.2"/><rect x="806.8" y="126.8" width="1.2" height="1.2"/><rect x="806.8" y="137.1" width="1.2" height="1.2"/><rect x="806.8" y="147.4" width="1.2" height="1.2"/><rect x="806.8" y="157.7" width="1.2" height="1.2"/><rect x="806.8" y="178.4" width="1.2" height="1.2"/><rect x="806.8" y="188.7" width="1.2" height="1.2"/><rect x="806.8" y="199.0" width="1.2" height="1.2"/><rect x="806.8" y="209.4" width="1.2" height="1.2"/><rect x="806.8" y="230.0" width="1.2" height="1.2"/><rect x="806.8" y="240.3" width="1.2" height="1.2"/><rect x="806.8" y="250.6" width="1.2" height="1.2"/><rect x="806.8" y="261.0" width="1.2" height="1.2"/><rect x="806.8" y="281.6" width="1.2" height="1.2"/><rect x="806.8" y="291.9" width="1.2" height="1.2"/><rect x="806.8" y="302.3" width="1.2" height="1.2"/><rect x="806.8" y="312.6" width="1.2" height="1.2"/><rect x="806.8" y="333.2" width="1.2" height="1.2"/><rect x="806.8" y="343.5" width="1.2" height="1.2"/><rect x="806.8" y="353.9" width="1.2" height="1.2"/><rect x="806.8" y="364.2" width="1.2" height="1.2"/><rect x="806.8" y="384.8" width="1.2" height="1.2"/><rect x="806.8" y="395.2" width="1.2" height="1.2"/><rect x="806.8" y="405.5" width="1.2" height="1.2"/><rect x="806.8" y="415.8" width="1.2" height="1.2"/><rect x="806.8" y="436.4" width="1.2" height="1.2"/><rect x="806.8" y="446.8" width="1.2" height="1.2"/><rect x="806.8" y="457.1" width="1.2" height="1.2"/><rect x="806.8" y="467.4" width="1.2" height="1.2"/><rect x="806.8" y="488.1" width="1.2" height="1.2"/><rect x="806.8" y="498.4" width="1.2" height="1.2"/><rect x="806.8" y="508.7" width="1.2" height="1.2"/><rect x="806.8" y="519.0" width="1.2" height="1.2"/><rect x="806.8" y="539.7" width="1.2" height="1.2"/><rect x="806.8" y="550.0" width="1.2" height="1.2"/><rect x="806.8" y="560.3" width="1.2" height="1.2"/><rect x="806.8" y="570.6" width="1.2" height="1.2"/></g>
<g stroke="#b4b4b4" stroke-width="1" stroke-dasharray="4 4.05">
<line x1="454.43" y1="62.4" x2="454.43" y2="581"/>
<line x1="14.93" y1="323.5" x2="896" y2="323.5"/>
</g>
<path d="M860,70.8 L889.5,70.8 L889.5,100 Z" fill="#555" stroke="#555" stroke-width="1.6" stroke-linejoin="round"/>
<g stroke="#a8a8a8" fill="none"><circle cx="883.6" cy="76.2" r="3.5" stroke-width="1.7"/><path d="M880.9,79 L875.3,84.3" stroke-width="2.4" stroke-linecap="round"/></g>
<g class="vl">
<text x="891.4" y="120.3">920 mV</text>
<text x="891.4" y="171.9">690 mV</text>
<text x="891.4" y="223.5">460 mV</text>
<text x="891.4" y="275.1">230 mV</text>
<text x="891.4" y="378.3">-230 mV</text>
<text x="891.4" y="429.9">-460 mV</text>
<text x="891.4" y="481.5">-690 mV</text>
<text x="891.4" y="533.1">-920 mV</text>
</g>
<g class="tl">
<text x="99.6" y="574.7">-160 µs</text>
<text x="188.1" y="574.7">-120 µs</text>
<text x="276.6" y="574.7">-80 µs</text>
<text x="365.1" y="574.7">-40 µs</text>
<text x="453.1" y="574.7">0 s</text>
<text x="542.1" y="574.7">40 µs</text>
<text x="630.6" y="574.7">80 µs</text>
<text x="719.1" y="574.7">120 µs</text>
<text x="807.6" y="574.7">160 µs</text>
</g>
<polyline points="11.0,156.08 11.5,154.47 12.0,152.89 12.5,151.35 13.0,149.84 13.5,148.37 14.0,146.93 14.5,145.53 15.0,144.16 15.5,142.83 16.0,141.54 16.5,140.28 17.0,139.07 17.5,137.89 18.0,136.74 18.5,135.64 19.0,134.57 19.5,133.54 20.0,132.55 20.5,131.60 21.0,130.69 21.5,129.82 22.0,128.99 22.5,128.19 23.0,127.44 23.5,126.73 24.0,126.05 24.5,125.42 25.0,124.83 25.5,124.27 26.0,123.76 26.5,123.29 27.0,122.86 27.5,122.47 28.0,122.12 28.5,121.81 29.0,121.54 29.5,121.31 30.0,121.13 30.5,120.99 31.0,120.88 31.5,120.82 32.0,120.80 32.5,120.82 33.0,120.88 33.5,120.99 34.0,121.13 34.5,121.31 35.0,121.54 35.5,121.81 36.0,122.12 36.5,122.47 37.0,122.86 37.5,123.29 38.0,123.76 38.5,124.27 39.0,124.83 39.5,125.42 40.0,126.05 40.5,126.73 41.0,127.44 41.5,128.19 42.0,128.99 42.5,129.82 43.0,130.69 43.5,131.60 44.0,132.55 44.5,133.54 45.0,134.57 45.5,135.64 46.0,136.74 46.5,137.89 47.0,139.07 47.5,140.28 48.0,141.54 48.5,142.83 49.0,144.16 49.5,145.53 50.0,146.93 50.5,148.37 51.0,149.84 51.5,151.35 52.0,152.89 52.5,154.47 53.0,156.08 53.5,157.73 54.0,159.41 54.5,161.13 55.0,162.87 55.5,164.65 56.0,166.47 56.5,168.31 57.0,170.19 57.5,172.09 58.0,174.03 58.5,176.00 59.0,178.00 59.5,180.03 60.0,182.09 60.5,184.17 61.0,186.29 61.5,188.43 62.0,190.60 62.5,192.80 63.0,195.02 63.5,197.27 64.0,199.55 64.5,201.85 65.0,204.18 65.5,206.53 66.0,208.90 66.5,211.30 67.0,213.72 67.5,216.17 68.0,218.63 68.5,221.12 69.0,223.63 69.5,226.16 70.0,228.71 70.5,231.27 71.0,233.86 71.5,236.47 72.0,239.09 72.5,241.73 73.0,244.39 73.5,247.06 74.0,249.75 74.5,252.46 75.0,255.18 75.5,257.91 76.0,260.66 76.5,263.42 77.0,266.19 77.5,268.98 78.0,271.77 78.5,274.58 79.0,277.40 79.5,280.22 80.0,283.06 80.5,285.90 81.0,288.75 81.5,291.61 82.0,294.48 82.5,297.35 83.0,300.23 83.5,303.11 84.0,306.00 84.5,308.89 85.0,311.79 85.5,314.68 86.0,317.58 86.5,320.48 87.0,323.39 87.5,326.29 88.0,329.19 88.5,332.09 89.0,334.99 89.5,337.89 90.0,340.78 90.5,343.68 91.0,346.57 91.5,349.45 92.0,352.33 92.5,355.20 93.0,358.07 93.5,360.93 94.0,363.79 94.5,366.63 95.0,369.47 95.5,372.30 96.0,375.12 96.5,377.93 97.0,380.73 97.5,383.51 98.0,386.29 98.5,389.05 99.0,391.80 99.5,394.54 100.0,397.26 100.5,399.97 101.0,402.67 101.5,405.34 102.0,408.01 102.5,410.65 103.0,413.28 103.5,415.89 104.0,418.48 104.5,421.05 105.0,423.61 105.5,426.14 106.0,428.65 106.5,431.15 107.0,433.62 107.5,436.07 108.0,438.49 108.5,440.90 109.0,443.28 109.5,445.64 110.0,447.97 110.5,450.28 111.0,452.56 111.5,454.82 112.0,457.05 112.5,459.25 113.0,461.43 113.5,463.58 114.0,465.70 114.5,467.80 115.0,469.86 115.5,471.90 116.0,473.90 116.5,475.88 117.0,477.82 117.5,479.74 118.0,481.62 118.5,483.48 119.0,485.30 119.5,487.08 120.0,488.84 120.5,490.56 121.0,492.25 121.5,493.91 122.0,495.53 122.5,497.12 123.0,498.67 123.5,500.19 124.0,501.67 124.5,503.12 125.0,504.53 125.5,505.90 126.0,507.24 126.5,508.54 127.0,509.81 127.5,511.03 128.0,512.22 128.5,513.37 129.0,514.49 129.5,515.57 130.0,516.60 130.5,517.60 131.0,518.56 131.5,519.48 132.0,520.37 132.5,521.21 133.0,522.01 133.5,522.78 134.0,523.50 134.5,524.18 135.0,524.83 135.5,525.43 136.0,525.99 136.5,526.52 137.0,527.00 137.5,527.44 138.0,527.84 138.5,528.20 139.0,528.52 139.5,528.80 140.0,529.03 140.5,529.23 141.0,529.38 141.5,529.50 142.0,529.57 142.5,529.60 143.0,529.59 143.5,529.54 144.0,529.44 144.5,529.31 145.0,529.14 145.5,528.92 146.0,528.66 146.5,528.36 147.0,528.02 147.5,527.64 148.0,527.22 148.5,526.76 149.0,526.26 149.5,525.72 150.0,525.13 150.5,524.51 151.0,523.85 151.5,523.14 152.0,522.40 152.5,521.62 153.0,520.79 153.5,519.93 154.0,519.03 154.5,518.09 155.0,517.11 155.5,516.09 156.0,515.03 156.5,513.94 157.0,512.80 157.5,511.63 158.0,510.42 158.5,509.18 159.0,507.89 159.5,506.57 160.0,505.22 160.5,503.83 161.0,502.40 161.5,500.93 162.0,499.43 162.5,497.90 163.0,496.33 163.5,494.72 164.0,493.08 164.5,491.41 165.0,489.71 165.5,487.97 166.0,486.19 166.5,484.39 167.0,482.55 167.5,480.69 168.0,478.79 168.5,476.86 169.0,474.89 169.5,472.90 170.0,470.88 170.5,468.83 171.0,466.75 171.5,464.64 172.0,462.51 172.5,460.34 173.0,458.15 173.5,455.94 174.0,453.69 174.5,451.42 175.0,449.13 175.5,446.81 176.0,444.46 176.5,442.09 177.0,439.70 177.5,437.28 178.0,434.85 178.5,432.39 179.0,429.90 179.5,427.40 180.0,424.88 180.5,422.33 181.0,419.77 181.5,417.19 182.0,414.59 182.5,411.97 183.0,409.33 183.5,406.68 184.0,404.01 184.5,401.32 185.0,398.62 185.5,395.90 186.0,393.17 186.5,390.43 187.0,387.67 187.5,384.90 188.0,382.12 188.5,379.33 189.0,376.52 189.5,373.71 190.0,370.89 190.5,368.05 191.0,365.21 191.5,362.36 192.0,359.50 192.5,356.64 193.0,353.77 193.5,350.89 194.0,348.01 194.5,345.12 195.0,342.23 195.5,339.34 196.0,336.44 196.5,333.54 197.0,330.64 197.5,327.74 198.0,324.84 198.5,321.94 199.0,319.03 199.5,316.13 200.0,313.23 200.5,310.34 201.0,307.45 201.5,304.56 202.0,301.67 202.5,298.79 203.0,295.91 203.5,293.05 204.0,290.18 204.5,287.33 205.0,284.48 205.5,281.64 206.0,278.81 206.5,275.99 207.0,273.17 207.5,270.37 208.0,267.58 208.5,264.80 209.0,262.04 209.5,259.28 210.0,256.54 210.5,253.82 211.0,251.10 211.5,248.41 212.0,245.72 212.5,243.06 213.0,240.41 213.5,237.78 214.0,235.16 214.5,232.57 215.0,229.99 215.5,227.43 216.0,224.89 216.5,222.37 217.0,219.87 217.5,217.40 218.0,214.94 218.5,212.51 219.0,210.10 219.5,207.71 220.0,205.35 220.5,203.01 221.0,200.70 221.5,198.41 222.0,196.14 222.5,193.91 223.0,191.70 223.5,189.51 224.0,187.35 224.5,185.23 225.0,183.12 225.5,181.05 226.0,179.01 226.5,177.00 227.0,175.01 227.5,173.06 228.0,171.14 228.5,169.24 229.0,167.38 229.5,165.56 230.0,163.76 230.5,162.00 231.0,160.26 231.5,158.57 232.0,156.90 232.5,155.27 233.0,153.68 233.5,152.12 234.0,150.59 234.5,149.10 235.0,147.64 235.5,146.22 236.0,144.84 236.5,143.49 237.0,142.18 237.5,140.91 238.0,139.67 238.5,138.47 239.0,137.31 239.5,136.19 240.0,135.10 240.5,134.05 241.0,133.04 241.5,132.07 242.0,131.14 242.5,130.25 243.0,129.40 243.5,128.59 244.0,127.81 244.5,127.08 245.0,126.38 245.5,125.73 246.0,125.12 246.5,124.54 247.0,124.01 247.5,123.52 248.0,123.07 248.5,122.66 249.0,122.29 249.5,121.96 250.0,121.67 250.5,121.42 251.0,121.22 251.5,121.05 252.0,120.93 252.5,120.85 253.0,120.81 253.5,120.81 254.0,120.85 254.5,120.93 255.0,121.05 255.5,121.22 256.0,121.42 256.5,121.67 257.0,121.96 257.5,122.29 258.0,122.66 258.5,123.07 259.0,123.52 259.5,124.01 260.0,124.54 260.5,125.12 261.0,125.73 261.5,126.38 262.0,127.08 262.5,127.81 263.0,128.59 263.5,129.40 264.0,130.25 264.5,131.14 265.0,132.07 265.5,133.04 266.0,134.05 266.5,135.10 267.0,136.19 267.5,137.31 268.0,138.47 268.5,139.67 269.0,140.91 269.5,142.18 270.0,143.49 270.5,144.84 271.0,146.22 271.5,147.64 272.0,149.10 272.5,150.59 273.0,152.12 273.5,153.68 274.0,155.27 274.5,156.90 275.0,158.57 275.5,160.26 276.0,162.00 276.5,163.76 277.0,165.56 277.5,167.38 278.0,169.24 278.5,171.14 279.0,173.06 279.5,175.01 280.0,177.00 280.5,179.01 281.0,181.05 281.5,183.12 282.0,185.23 282.5,187.35 283.0,189.51 283.5,191.70 284.0,193.91 284.5,196.14 285.0,198.41 285.5,200.70 286.0,203.01 286.5,205.35 287.0,207.71 287.5,210.10 288.0,212.51 288.5,214.94 289.0,217.40 289.5,219.87 290.0,222.37 290.5,224.89 291.0,227.43 291.5,229.99 292.0,232.57 292.5,235.16 293.0,237.78 293.5,240.41 294.0,243.06 294.5,245.72 295.0,248.41 295.5,251.10 296.0,253.82 296.5,256.54 297.0,259.28 297.5,262.04 298.0,264.80 298.5,267.58 299.0,270.37 299.5,273.17 300.0,275.99 300.5,278.81 301.0,281.64 301.5,284.48 302.0,287.33 302.5,290.18 303.0,293.05 303.5,295.91 304.0,298.79 304.5,301.67 305.0,304.56 305.5,307.45 306.0,310.34 306.5,313.23 307.0,316.13 307.5,319.03 308.0,321.94 308.5,324.84 309.0,327.74 309.5,330.64 310.0,333.54 310.5,336.44 311.0,339.34 311.5,342.23 312.0,345.12 312.5,348.01 313.0,350.89 313.5,353.77 314.0,356.64 314.5,359.50 315.0,362.36 315.5,365.21 316.0,368.05 316.5,370.89 317.0,373.71 317.5,376.52 318.0,379.33 318.5,382.12 319.0,384.90 319.5,387.67 320.0,390.43 320.5,393.17 321.0,395.90 321.5,398.62 322.0,401.32 322.5,404.01 323.0,406.68 323.5,409.33 324.0,411.97 324.5,414.59 325.0,417.19 325.5,419.77 326.0,422.33 326.5,424.88 327.0,427.40 327.5,429.90 328.0,432.39 328.5,434.85 329.0,437.28 329.5,439.70 330.0,442.09 330.5,444.46 331.0,446.81 331.5,449.13 332.0,451.42 332.5,453.69 333.0,455.94 333.5,458.15 334.0,460.34 334.5,462.51 335.0,464.64 335.5,466.75 336.0,468.83 336.5,470.88 337.0,472.90 337.5,474.89 338.0,476.86 338.5,478.79 339.0,480.69 339.5,482.55 340.0,484.39 340.5,486.19 341.0,487.97 341.5,489.71 342.0,491.41 342.5,493.08 343.0,494.72 343.5,496.33 344.0,497.90 344.5,499.43 345.0,500.93 345.5,502.40 346.0,503.83 346.5,505.22 347.0,506.57 347.5,507.89 348.0,509.18 348.5,510.42 349.0,511.63 349.5,512.80 350.0,513.94 350.5,515.03 351.0,516.09 351.5,517.11 352.0,518.09 352.5,519.03 353.0,519.93 353.5,520.79 354.0,521.62 354.5,522.40 355.0,523.14 355.5,523.85 356.0,524.51 356.5,525.13 357.0,525.72 357.5,526.26 358.0,526.76 358.5,527.22 359.0,527.64 359.5,528.02 360.0,528.36 360.5,528.66 361.0,528.92 361.5,529.14 362.0,529.31 362.5,529.44 363.0,529.54 363.5,529.59 364.0,529.60 364.5,529.57 365.0,529.50 365.5,529.38 366.0,529.23 366.5,529.03 367.0,528.80 367.5,528.52 368.0,528.20 368.5,527.84 369.0,527.44 369.5,527.00 370.0,526.52 370.5,525.99 371.0,525.43 371.5,524.83 372.0,524.18 372.5,523.50 373.0,522.78 373.5,522.01 374.0,521.21 374.5,520.37 375.0,519.48 375.5,518.56 376.0,517.60 376.5,516.60 377.0,515.57 377.5,514.49 378.0,513.37 378.5,512.22 379.0,511.03 379.5,509.81 380.0,508.54 380.5,507.24 381.0,505.90 381.5,504.53 382.0,503.12 382.5,501.67 383.0,500.19 383.5,498.67 384.0,497.12 384.5,495.53 385.0,493.91 385.5,492.25 386.0,490.56 386.5,488.84 387.0,487.08 387.5,485.30 388.0,483.48 388.5,481.62 389.0,479.74 389.5,477.82 390.0,475.88 390.5,473.90 391.0,471.90 391.5,469.86 392.0,467.80 392.5,465.70 393.0,463.58 393.5,461.43 394.0,459.25 394.5,457.05 395.0,454.82 395.5,452.56 396.0,450.28 396.5,447.97 397.0,445.64 397.5,443.28 398.0,440.90 398.5,438.49 399.0,436.07 399.5,433.62 400.0,431.15 400.5,428.65 401.0,426.14 401.5,423.61 402.0,421.05 402.5,418.48 403.0,415.89 403.5,413.28 404.0,410.65 404.5,408.01 405.0,405.34 405.5,402.67 406.0,399.97 406.5,397.26 407.0,394.54 407.5,391.80 408.0,389.05 408.5,386.29 409.0,383.51 409.5,380.73 410.0,377.93 410.5,375.12 411.0,372.30 411.5,369.47 412.0,366.63 412.5,363.79 413.0,360.93 413.5,358.07 414.0,355.20 414.5,352.33 415.0,349.45 415.5,346.57 416.0,343.68 416.5,340.78 417.0,337.89 417.5,334.99 418.0,332.09 418.5,329.19 419.0,326.29 419.5,323.39 420.0,320.48 420.5,317.58 421.0,314.68 421.5,311.79 422.0,308.89 422.5,306.00 423.0,303.11 423.5,300.23 424.0,297.35 424.5,294.48 425.0,291.61 425.5,288.75 426.0,285.90 426.5,283.06 427.0,280.22 427.5,277.40 428.0,274.58 428.5,271.77 429.0,268.98 429.5,266.19 430.0,263.42 430.5,260.66 431.0,257.91 431.5,255.18 432.0,252.46 432.5,249.75 433.0,247.06 433.5,244.39 434.0,241.73 434.5,239.09 435.0,236.47 435.5,233.86 436.0,231.27 436.5,228.71 437.0,226.16 437.5,223.63 438.0,221.12 438.5,218.63 439.0,216.17 439.5,213.72 440.0,211.30 440.5,208.90 441.0,206.53 441.5,204.18 442.0,201.85 442.5,199.55 443.0,197.27 443.5,195.02 444.0,192.80 444.5,190.60 445.0,188.43 445.5,186.29 446.0,184.17 446.5,182.09 447.0,180.03 447.5,178.00 448.0,176.00 448.5,174.03 449.0,172.09 449.5,170.19 450.0,168.31 450.5,166.47 451.0,164.65 451.5,162.87 452.0,161.13 452.5,159.41 453.0,157.73 453.5,156.08 454.0,154.47 454.5,152.89 455.0,151.35 455.5,149.84 456.0,148.37 456.5,146.93 457.0,145.53 457.5,144.16 458.0,142.83 458.5,141.54 459.0,140.28 459.5,139.07 460.0,137.89 460.5,136.74 461.0,135.64 461.5,134.57 462.0,133.54 462.5,132.55 463.0,131.60 463.5,130.69 464.0,129.82 464.5,128.99 465.0,128.19 465.5,127.44 466.0,126.73 466.5,126.05 467.0,125.42 467.5,124.83 468.0,124.27 468.5,123.76 469.0,123.29 469.5,122.86 470.0,122.47 470.5,122.12 471.0,121.81 471.5,121.54 472.0,121.31 472.5,121.13 473.0,120.99 473.5,120.88 474.0,120.82 474.5,120.80 475.0,120.82 475.5,120.88 476.0,120.99 476.5,121.13 477.0,121.31 477.5,121.54 478.0,121.81 478.5,122.12 479.0,122.47 479.5,122.86 480.0,123.29 480.5,123.76 481.0,124.27 481.5,124.83 482.0,125.42 482.5,126.05 483.0,126.73 483.5,127.44 484.0,128.19 484.5,128.99 485.0,129.82 485.5,130.69 486.0,131.60 486.5,132.55 487.0,133.54 487.5,134.57 488.0,135.64 488.5,136.74 489.0,137.89 489.5,139.07 490.0,140.28 490.5,141.54 491.0,142.83 491.5,144.16 492.0,145.53 492.5,146.93 493.0,148.37 493.5,149.84 494.0,151.35 494.5,152.89 495.0,154.47 495.5,156.08 496.0,157.73 496.5,159.41 497.0,161.13 497.5,162.87 498.0,164.65 498.5,166.47 499.0,168.31 499.5,170.19 500.0,172.09 500.5,174.03 501.0,176.00 501.5,178.00 502.0,180.03 502.5,182.09 503.0,184.17 503.5,186.29 504.0,188.43 504.5,190.60 505.0,192.80 505.5,195.02 506.0,197.27 506.5,199.55 507.0,201.85 507.5,204.18 508.0,206.53 508.5,208.90 509.0,211.30 509.5,213.72 510.0,216.17 510.5,218.63 511.0,221.12 511.5,223.63 512.0,226.16 512.5,228.71 513.0,231.27 513.5,233.86 514.0,236.47 514.5,239.09 515.0,241.73 515.5,244.39 516.0,247.06 516.5,249.75 517.0,252.46 517.5,255.18 518.0,257.91 518.5,260.66 519.0,263.42 519.5,266.19 520.0,268.98 520.5,271.77 521.0,274.58 521.5,277.40 522.0,280.22 522.5,283.06 523.0,285.90 523.5,288.75 524.0,291.61 524.5,294.48 525.0,297.35 525.5,300.23 526.0,303.11 526.5,306.00 527.0,308.89 527.5,311.79 528.0,314.68 528.5,317.58 529.0,320.48 529.5,323.39 530.0,326.29 530.5,329.19 531.0,332.09 531.5,334.99 532.0,337.89 532.5,340.78 533.0,343.68 533.5,346.57 534.0,349.45 534.5,352.33 535.0,355.20 535.5,358.07 536.0,360.93 536.5,363.79 537.0,366.63 537.5,369.47 538.0,372.30 538.5,375.12 539.0,377.93 539.5,380.73 540.0,383.51 540.5,386.29 541.0,389.05 541.5,391.80 542.0,394.54 542.5,397.26 543.0,399.97 543.5,402.67 544.0,405.34 544.5,408.01 545.0,410.65 545.5,413.28 546.0,415.89 546.5,418.48 547.0,421.05 547.5,423.61 548.0,426.14 548.5,428.65 549.0,431.15 549.5,433.62 550.0,436.07 550.5,438.49 551.0,440.90 551.5,443.28 552.0,445.64 552.5,447.97 553.0,450.28 553.5,452.56 554.0,454.82 554.5,457.05 555.0,459.25 555.5,461.43 556.0,463.58 556.5,465.70 557.0,467.80 557.5,469.86 558.0,471.90 558.5,473.90 559.0,475.88 559.5,477.82 560.0,479.74 560.5,481.62 561.0,483.48 561.5,485.30 562.0,487.08 562.5,488.84 563.0,490.56 563.5,492.25 564.0,493.91 564.5,495.53 565.0,497.12 565.5,498.67 566.0,500.19 566.5,501.67 567.0,503.12 567.5,504.53 568.0,505.90 568.5,507.24 569.0,508.54 569.5,509.81 570.0,511.03 570.5,512.22 571.0,513.37 571.5,514.49 572.0,515.57 572.5,516.60 573.0,517.60 573.5,518.56 574.0,519.48 574.5,520.37 575.0,521.21 575.5,522.01 576.0,522.78 576.5,523.50 577.0,524.18 577.5,524.83 578.0,525.43 578.5,525.99 579.0,526.52 579.5,527.00 580.0,527.44 580.5,527.84 581.0,528.20 581.5,528.52 582.0,528.80 582.5,529.03 583.0,529.23 583.5,529.38 584.0,529.50 584.5,529.57 585.0,529.60 585.5,529.59 586.0,529.54 586.5,529.44 587.0,529.31 587.5,529.14 588.0,528.92 588.5,528.66 589.0,528.36 589.5,528.02 590.0,527.64 590.5,527.22 591.0,526.76 591.5,526.26 592.0,525.72 592.5,525.13 593.0,524.51 593.5,523.85 594.0,523.14 594.5,522.40 595.0,521.62 595.5,520.79 596.0,519.93 596.5,519.03 597.0,518.09 597.5,517.11 598.0,516.09 598.5,515.03 599.0,513.94 599.5,512.80 600.0,511.63 600.5,510.42 601.0,509.18 601.5,507.89 602.0,506.57 602.5,505.22 603.0,503.83 603.5,502.40 604.0,500.93 604.5,499.43 605.0,497.90 605.5,496.33 606.0,494.72 606.5,493.08 607.0,491.41 607.5,489.71 608.0,487.97 608.5,486.19 609.0,484.39 609.5,482.55 610.0,480.69 610.5,478.79 611.0,476.86 611.5,474.89 612.0,472.90 612.5,470.88 613.0,468.83 613.5,466.75 614.0,464.64 614.5,462.51 615.0,460.34 615.5,458.15 616.0,455.94 616.5,453.69 617.0,451.42 617.5,449.13 618.0,446.81 618.5,444.46 619.0,442.09 619.5,439.70 620.0,437.28 620.5,434.85 621.0,432.39 621.5,429.90 622.0,427.40 622.5,424.88 623.0,422.33 623.5,419.77 624.0,417.19 624.5,414.59 625.0,411.97 625.5,409.33 626.0,406.68 626.5,404.01 627.0,401.32 627.5,398.62 628.0,395.90 628.5,393.17 629.0,390.43 629.5,387.67 630.0,384.90 630.5,382.12 631.0,379.33 631.5,376.52 632.0,373.71 632.5,370.89 633.0,368.05 633.5,365.21 634.0,362.36 634.5,359.50 635.0,356.64 635.5,353.77 636.0,350.89 636.5,348.01 637.0,345.12 637.5,342.23 638.0,339.34 638.5,336.44 639.0,333.54 639.5,330.64 640.0,327.74 640.5,324.84 641.0,321.94 641.5,319.03 642.0,316.13 642.5,313.23 643.0,310.34 643.5,307.45 644.0,304.56 644.5,301.67 645.0,298.79 645.5,295.91 646.0,293.05 646.5,290.18 647.0,287.33 647.5,284.48 648.0,281.64 648.5,278.81 649.0,275.99 649.5,273.17 650.0,270.37 650.5,267.58 651.0,264.80 651.5,262.04 652.0,259.28 652.5,256.54 653.0,253.82 653.5,251.10 654.0,248.41 654.5,245.72 655.0,243.06 655.5,240.41 656.0,237.78 656.5,235.16 657.0,232.57 657.5,229.99 658.0,227.43 658.5,224.89 659.0,222.37 659.5,219.87 660.0,217.40 660.5,214.94 661.0,212.51 661.5,210.10 662.0,207.71 662.5,205.35 663.0,203.01 663.5,200.70 664.0,198.41 664.5,196.14 665.0,193.91 665.5,191.70 666.0,189.51 666.5,187.35 667.0,185.23 667.5,183.12 668.0,181.05 668.5,179.01 669.0,177.00 669.5,175.01 670.0,173.06 670.5,171.14 671.0,169.24 671.5,167.38 672.0,165.56 672.5,163.76 673.0,162.00 673.5,160.26 674.0,158.57 674.5,156.90 675.0,155.27 675.5,153.68 676.0,152.12 676.5,150.59 677.0,149.10 677.5,147.64 678.0,146.22 678.5,144.84 679.0,143.49 679.5,142.18 680.0,140.91 680.5,139.67 681.0,138.47 681.5,137.31 682.0,136.19 682.5,135.10 683.0,134.05 683.5,133.04 684.0,132.07 684.5,131.14 685.0,130.25 685.5,129.40 686.0,128.59 686.5,127.81 687.0,127.08 687.5,126.38 688.0,125.73 688.5,125.12 689.0,124.54 689.5,124.01 690.0,123.52 690.5,123.07 691.0,122.66 691.5,122.29 692.0,121.96 692.5,121.67 693.0,121.42 693.5,121.22 694.0,121.05 694.5,120.93 695.0,120.85 695.5,120.81 696.0,120.81 696.5,120.85 697.0,120.93 697.5,121.05 698.0,121.22 698.5,121.42 699.0,121.67 699.5,121.96 700.0,122.29 700.5,122.66 701.0,123.07 701.5,123.52 702.0,124.01 702.5,124.54 703.0,125.12 703.5,125.73 704.0,126.38 704.5,127.08 705.0,127.81 705.5,128.59 706.0,129.40 706.5,130.25 707.0,131.14 707.5,132.07 708.0,133.04 708.5,134.05 709.0,135.10 709.5,136.19 710.0,137.31 710.5,138.47 711.0,139.67 711.5,140.91 712.0,142.18 712.5,143.49 713.0,144.84 713.5,146.22 714.0,147.64 714.5,149.10 715.0,150.59 715.5,152.12 716.0,153.68 716.5,155.27 717.0,156.90 717.5,158.57 718.0,160.26 718.5,162.00 719.0,163.76 719.5,165.56 720.0,167.38 720.5,169.24 721.0,171.14 721.5,173.06 722.0,175.01 722.5,177.00 723.0,179.01 723.5,181.05 724.0,183.12 724.5,185.23 725.0,187.35 725.5,189.51 726.0,191.70 726.5,193.91 727.0,196.14 727.5,198.41 728.0,200.70 728.5,203.01 729.0,205.35 729.5,207.71 730.0,210.10 730.5,212.51 731.0,214.94 731.5,217.40 732.0,219.87 732.5,222.37 733.0,224.89 733.5,227.43 734.0,229.99 734.5,232.57 735.0,235.16 735.5,237.78 736.0,240.41 736.5,243.06 737.0,245.72 737.5,248.41 738.0,251.10 738.5,253.82 739.0,256.54 739.5,259.28 740.0,262.04 740.5,264.80 741.0,267.58 741.5,270.37 742.0,273.17 742.5,275.99 743.0,278.81 743.5,281.64 744.0,284.48 744.5,287.33 745.0,290.18 745.5,293.05 746.0,295.91 746.5,298.79 747.0,301.67 747.5,304.56 748.0,307.45 748.5,310.34 749.0,313.23 749.5,316.13 750.0,319.03 750.5,321.94 751.0,324.84 751.5,327.74 752.0,330.64 752.5,333.54 753.0,336.44 753.5,339.34 754.0,342.23 754.5,345.12 755.0,348.01 755.5,350.89 756.0,353.77 756.5,356.64 757.0,359.50 757.5,362.36 758.0,365.21 758.5,368.05 759.0,370.89 759.5,373.71 760.0,376.52 760.5,379.33 761.0,382.12 761.5,384.90 762.0,387.67 762.5,390.43 763.0,393.17 763.5,395.90 764.0,398.62 764.5,401.32 765.0,404.01 765.5,406.68 766.0,409.33 766.5,411.97 767.0,414.59 767.5,417.19 768.0,419.77 768.5,422.33 769.0,424.88 769.5,427.40 770.0,429.90 770.5,432.39 771.0,434.85 771.5,437.28 772.0,439.70 772.5,442.09 773.0,444.46 773.5,446.81 774.0,449.13 774.5,451.42 775.0,453.69 775.5,455.94 776.0,458.15 776.5,460.34 777.0,462.51 777.5,464.64 778.0,466.75 778.5,468.83 779.0,470.88 779.5,472.90 780.0,474.89 780.5,476.86 781.0,478.79 781.5,480.69 782.0,482.55 782.5,484.39 783.0,486.19 783.5,487.97 784.0,489.71 784.5,491.41 785.0,493.08 785.5,494.72 786.0,496.33 786.5,497.90 787.0,499.43 787.5,500.93 788.0,502.40 788.5,503.83 789.0,505.22 789.5,506.57 790.0,507.89 790.5,509.18 791.0,510.42 791.5,511.63 792.0,512.80 792.5,513.94 793.0,515.03 793.5,516.09 794.0,517.11 794.5,518.09 795.0,519.03 795.5,519.93 796.0,520.79 796.5,521.62 797.0,522.40 797.5,523.14 798.0,523.85 798.5,524.51 799.0,525.13 799.5,525.72 800.0,526.26 800.5,526.76 801.0,527.22 801.5,527.64 802.0,528.02 802.5,528.36 803.0,528.66 803.5,528.92 804.0,529.14 804.5,529.31 805.0,529.44 805.5,529.54 806.0,529.59 806.5,529.60 807.0,529.57 807.5,529.50 808.0,529.38 808.5,529.23 809.0,529.03 809.5,528.80 810.0,528.52 810.5,528.20 811.0,527.84 811.5,527.44 812.0,527.00 812.5,526.52 813.0,525.99 813.5,525.43 814.0,524.83 814.5,524.18 815.0,523.50 815.5,522.78 816.0,522.01 816.5,521.21 817.0,520.37 817.5,519.48 818.0,518.56 818.5,517.60 819.0,516.60 819.5,515.57 820.0,514.49 820.5,513.37 821.0,512.22 821.5,511.03 822.0,509.81 822.5,508.54 823.0,507.24 823.5,505.90 824.0,504.53 824.5,503.12 825.0,501.67 825.5,500.19 826.0,498.67 826.5,497.12 827.0,495.53 827.5,493.91 828.0,492.25 828.5,490.56 829.0,488.84 829.5,487.08 830.0,485.30 830.5,483.48 831.0,481.62 831.5,479.74 832.0,477.82 832.5,475.88 833.0,473.90 833.5,471.90 834.0,469.86 834.5,467.80 835.0,465.70 835.5,463.58 836.0,461.43 836.5,459.25 837.0,457.05 837.5,454.82 838.0,452.56 838.5,450.28 839.0,447.97 839.5,445.64 840.0,443.28 840.5,440.90 841.0,438.49 841.5,436.07 842.0,433.62 842.5,431.15 843.0,428.65 843.5,426.14 844.0,423.61 844.5,421.05 845.0,418.48 845.5,415.89 846.0,413.28 846.5,410.65 847.0,408.01 847.5,405.34 848.0,402.67 848.5,399.97 849.0,397.26 849.5,394.54 850.0,391.80 850.5,389.05 851.0,386.29 851.5,383.51 852.0,380.73 852.5,377.93 853.0,375.12 853.5,372.30 854.0,369.47 854.5,366.63 855.0,363.79 855.5,360.93 856.0,358.07 856.5,355.20 857.0,352.33 857.5,349.45 858.0,346.57 858.5,343.68 859.0,340.78 859.5,337.89 860.0,334.99 860.5,332.09 861.0,329.19 861.5,326.29 862.0,323.39 862.5,320.48 863.0,317.58 863.5,314.68 864.0,311.79 864.5,308.89 865.0,306.00 865.5,303.11 866.0,300.23 866.5,297.35 867.0,294.48 867.5,291.61 868.0,288.75 868.5,285.90 869.0,283.06 869.5,280.22 870.0,277.40 870.5,274.58 871.0,271.77 871.5,268.98 872.0,266.19 872.5,263.42 873.0,260.66 873.5,257.91 874.0,255.18 874.5,252.46 875.0,249.75 875.5,247.06 876.0,244.39 876.5,241.73 877.0,239.09 877.5,236.47 878.0,233.86 878.5,231.27 879.0,228.71 879.5,226.16 880.0,223.63 880.5,221.12 881.0,218.63 881.5,216.17 882.0,213.72 882.5,211.30 883.0,208.90 883.5,206.53 884.0,204.18 884.5,201.85 885.0,199.55 885.5,197.27 886.0,195.02 886.5,192.80 887.0,190.60 887.5,188.43 888.0,186.29 888.5,184.17 889.0,182.09 889.5,180.03 890.0,178.00 890.5,176.00 891.0,174.03 891.5,172.09 892.0,170.19 892.5,168.31 893.0,166.47 893.5,164.65 894.0,162.87 894.5,161.13 895.0,159.41 895.5,157.73 896.0,156.08 896.5,154.47 897.0,152.89" fill="none" stroke="#1cbccc" stroke-width="1.2"/>
<polyline points="11.0,322.10 11.5,319.07 12.0,316.04 12.5,313.01 13.0,309.98 13.5,306.95 14.0,303.93 14.5,300.91 15.0,297.89 15.5,294.88 16.0,291.88 16.5,288.89 17.0,285.90 17.5,282.91 18.0,279.94 18.5,276.98 19.0,274.02 19.5,271.08 20.0,268.14 20.5,265.22 21.0,262.31 21.5,259.41 22.0,256.52 22.5,253.65 23.0,250.79 23.5,247.95 24.0,245.12 24.5,242.31 25.0,239.51 25.5,236.73 26.0,233.97 26.5,231.23 27.0,228.51 27.5,225.80 28.0,223.12 28.5,220.45 29.0,217.81 29.5,215.19 30.0,212.58 30.5,210.01 31.0,207.45 31.5,204.92 32.0,202.41 32.5,199.93 33.0,197.47 33.5,195.04 34.0,192.63 34.5,190.25 35.0,187.90 35.5,185.57 36.0,183.28 36.5,181.01 37.0,178.77 37.5,176.56 38.0,174.37 38.5,172.22 39.0,170.10 39.5,168.01 40.0,165.95 40.5,163.93 41.0,161.93 41.5,159.97 42.0,158.04 42.5,156.15 43.0,154.29 43.5,152.46 44.0,150.67 44.5,148.91 45.0,147.19 45.5,145.50 46.0,143.85 46.5,142.24 47.0,140.66 47.5,139.12 48.0,137.62 48.5,136.15 49.0,134.72 49.5,133.33 50.0,131.98 50.5,130.67 51.0,129.40 51.5,128.16 52.0,126.97 52.5,125.81 53.0,124.70 53.5,123.62 54.0,122.59 54.5,121.60 55.0,120.64 55.5,119.73 56.0,118.86 56.5,118.03 57.0,117.24 57.5,116.50 58.0,115.79 58.5,115.13 59.0,114.51 59.5,113.93 60.0,113.39 60.5,112.90 61.0,112.45 61.5,112.04 62.0,111.68 62.5,111.35 63.0,111.08 63.5,110.84 64.0,110.64 64.5,110.49 65.0,110.39 65.5,110.32 66.0,110.30 66.5,110.32 67.0,110.39 67.5,110.49 68.0,110.64 68.5,110.84 69.0,111.08 69.5,111.35 70.0,111.68 70.5,112.04 71.0,112.45 71.5,112.90 72.0,113.39 72.5,113.93 73.0,114.51 73.5,115.13 74.0,115.79 74.5,116.50 75.0,117.24 75.5,118.03 76.0,118.86 76.5,119.73 77.0,120.64 77.5,121.60 78.0,122.59 78.5,123.62 79.0,124.70 79.5,125.81 80.0,126.97 80.5,128.16 81.0,129.40 81.5,130.67 82.0,131.98 82.5,133.33 83.0,134.72 83.5,136.15 84.0,137.62 84.5,139.12 85.0,140.66 85.5,142.24 86.0,143.85 86.5,145.50 87.0,147.19 87.5,148.91 88.0,150.67 88.5,152.46 89.0,154.29 89.5,156.15 90.0,158.04 90.5,159.97 91.0,161.93 91.5,163.93 92.0,165.95 92.5,168.01 93.0,170.10 93.5,172.22 94.0,174.37 94.5,176.56 95.0,178.77 95.5,181.01 96.0,183.28 96.5,185.57 97.0,187.90 97.5,190.25 98.0,192.63 98.5,195.04 99.0,197.47 99.5,199.93 100.0,202.41 100.5,204.92 101.0,207.45 101.5,210.01 102.0,212.58 102.5,215.19 103.0,217.81 103.5,220.45 104.0,223.12 104.5,225.80 105.0,228.51 105.5,231.23 106.0,233.97 106.5,236.73 107.0,239.51 107.5,242.31 108.0,245.12 108.5,247.95 109.0,250.79 109.5,253.65 110.0,256.52 110.5,259.41 111.0,262.31 111.5,265.22 112.0,268.14 112.5,271.08 113.0,274.02 113.5,276.98 114.0,279.94 114.5,282.91 115.0,285.90 115.5,288.89 116.0,291.88 116.5,294.88 117.0,297.89 117.5,300.91 118.0,303.93 118.5,306.95 119.0,309.98 119.5,313.01 120.0,316.04 120.5,319.07 121.0,322.10 121.5,325.14 122.0,328.17 122.5,331.21 123.0,334.24 123.5,337.27 124.0,340.29 124.5,343.32 125.0,346.34 125.5,349.35 126.0,352.36 126.5,355.37 127.0,358.37 127.5,361.36 128.0,364.34 128.5,367.32 129.0,370.28 129.5,373.24 130.0,376.19 130.5,379.13 131.0,382.05 131.5,384.97 132.0,387.87 132.5,390.76 133.0,393.63 133.5,396.50 134.0,399.34 134.5,402.17 135.0,404.99 135.5,407.79 136.0,410.57 136.5,413.34 137.0,416.09 137.5,418.81 138.0,421.52 138.5,424.21 139.0,426.88 139.5,429.53 140.0,432.16 140.5,434.77 141.0,437.35 141.5,439.91 142.0,442.45 142.5,444.96 143.0,447.45 143.5,449.92 144.0,452.36 144.5,454.77 145.0,457.16 145.5,459.51 146.0,461.85 146.5,464.15 147.0,466.43 147.5,468.68 148.0,470.89 148.5,473.08 149.0,475.24 149.5,477.37 150.0,479.47 150.5,481.53 151.0,483.57 151.5,485.57 152.0,487.54 152.5,489.48 153.0,491.38 153.5,493.25 154.0,495.09 154.5,496.89 155.0,498.65 155.5,500.38 156.0,502.08 156.5,503.74 157.0,505.36 157.5,506.95 158.0,508.50 158.5,510.01 159.0,511.49 159.5,512.92 160.0,514.32 160.5,515.68 161.0,517.00 161.5,518.29 162.0,519.53 162.5,520.74 163.0,521.90 163.5,523.03 164.0,524.11 164.5,525.16 165.0,526.16 165.5,527.12 166.0,528.05 166.5,528.93 167.0,529.77 167.5,530.56 168.0,531.32 168.5,532.04 169.0,532.71 169.5,533.34 170.0,533.93 170.5,534.48 171.0,534.98 171.5,535.44 172.0,535.86 172.5,536.24 173.0,536.57 173.5,536.86 174.0,537.11 174.5,537.31 175.0,537.47 175.5,537.59 176.0,537.67 176.5,537.70 177.0,537.69 177.5,537.63 178.0,537.54 178.5,537.40 179.0,537.21 179.5,536.99 180.0,536.72 180.5,536.41 181.0,536.05 181.5,535.66 182.0,535.22 182.5,534.73 183.0,534.21 183.5,533.64 184.0,533.03 184.5,532.38 185.0,531.68 185.5,530.95 186.0,530.17 186.5,529.35 187.0,528.49 187.5,527.59 188.0,526.65 188.5,525.66 189.0,524.64 189.5,523.57 190.0,522.47 190.5,521.32 191.0,520.14 191.5,518.91 192.0,517.65 192.5,516.35 193.0,515.01 193.5,513.63 194.0,512.21 194.5,510.75 195.0,509.26 195.5,507.73 196.0,506.16 196.5,504.55 197.0,502.91 197.5,501.24 198.0,499.52 198.5,497.77 199.0,495.99 199.5,494.17 200.0,492.32 200.5,490.43 201.0,488.51 201.5,486.56 202.0,484.57 202.5,482.56 203.0,480.51 203.5,478.42 204.0,476.31 204.5,474.17 205.0,471.99 205.5,469.79 206.0,467.56 206.5,465.29 207.0,463.00 207.5,460.68 208.0,458.34 208.5,455.97 209.0,453.57 209.5,451.14 210.0,448.69 210.5,446.21 211.0,443.71 211.5,441.18 212.0,438.63 212.5,436.06 213.0,433.47 213.5,430.85 214.0,428.21 214.5,425.55 215.0,422.87 215.5,420.17 216.0,417.45 216.5,414.71 217.0,411.96 217.5,409.18 218.0,406.39 218.5,403.58 219.0,400.76 219.5,397.92 220.0,395.07 220.5,392.20 221.0,389.32 221.5,386.42 222.0,383.51 222.5,380.59 223.0,377.66 223.5,374.72 224.0,371.76 224.5,368.80 225.0,365.83 225.5,362.85 226.0,359.86 226.5,356.87 227.0,353.87 227.5,350.86 228.0,347.85 228.5,344.83 229.0,341.81 229.5,338.78 230.0,335.75 230.5,332.72 231.0,329.69 231.5,326.66 232.0,323.62 232.5,320.59 233.0,317.55 233.5,314.52 234.0,311.49 234.5,308.46 235.0,305.44 235.5,302.42 236.0,299.40 236.5,296.39 237.0,293.38 237.5,290.38 238.0,287.39 238.5,284.40 239.0,281.43 239.5,278.46 240.0,275.50 240.5,272.55 241.0,269.61 241.5,266.68 242.0,263.76 242.5,260.86 243.0,257.96 243.5,255.08 244.0,252.22 244.5,249.37 245.0,246.53 245.5,243.71 246.0,240.91 246.5,238.12 247.0,235.35 247.5,232.60 248.0,229.87 248.5,227.15 249.0,224.46 249.5,221.78 250.0,219.13 250.5,216.49 251.0,213.88 251.5,211.29 252.0,208.73 252.5,206.18 253.0,203.66 253.5,201.17 254.0,198.70 254.5,196.25 255.0,193.83 255.5,191.44 256.0,189.07 256.5,186.73 257.0,184.42 257.5,182.14 258.0,179.88 258.5,177.66 259.0,175.46 259.5,173.29 260.0,171.16 260.5,169.05 261.0,166.98 261.5,164.94 262.0,162.93 262.5,160.95 263.0,159.00 263.5,157.09 264.0,155.21 264.5,153.37 265.0,151.56 265.5,149.79 266.0,148.05 266.5,146.34 267.0,144.67 267.5,143.04 268.0,141.44 268.5,139.89 269.0,138.36 269.5,136.88 270.0,135.43 270.5,134.02 271.0,132.65 271.5,131.32 272.0,130.03 272.5,128.78 273.0,127.56 273.5,126.39 274.0,125.25 274.5,124.16 275.0,123.10 275.5,122.09 276.0,121.11 276.5,120.18 277.0,119.29 277.5,118.44 278.0,117.63 278.5,116.86 279.0,116.14 279.5,115.45 280.0,114.81 280.5,114.21 281.0,113.66 281.5,113.14 282.0,112.67 282.5,112.24 283.0,111.85 283.5,111.51 284.0,111.21 284.5,110.95 285.0,110.74 285.5,110.56 286.0,110.43 286.5,110.35 287.0,110.31 287.5,110.31 288.0,110.35 288.5,110.43 289.0,110.56 289.5,110.74 290.0,110.95 290.5,111.21 291.0,111.51 291.5,111.85 292.0,112.24 292.5,112.67 293.0,113.14 293.5,113.66 294.0,114.21 294.5,114.81 295.0,115.45 295.5,116.14 296.0,116.86 296.5,117.63 297.0,118.44 297.5,119.29 298.0,120.18 298.5,121.11 299.0,122.09 299.5,123.10 300.0,124.16 300.5,125.25 301.0,126.39 301.5,127.56 302.0,128.78 302.5,130.03 303.0,131.32 303.5,132.65 304.0,134.02 304.5,135.43 305.0,136.88 305.5,138.36 306.0,139.89 306.5,141.44 307.0,143.04 307.5,144.67 308.0,146.34 308.5,148.05 309.0,149.79 309.5,151.56 310.0,153.37 310.5,155.21 311.0,157.09 311.5,159.00 312.0,160.95 312.5,162.93 313.0,164.94 313.5,166.98 314.0,169.05 314.5,171.16 315.0,173.29 315.5,175.46 316.0,177.66 316.5,179.88 317.0,182.14 317.5,184.42 318.0,186.73 318.5,189.07 319.0,191.44 319.5,193.83 320.0,196.25 320.5,198.70 321.0,201.17 321.5,203.66 322.0,206.18 322.5,208.73 323.0,211.29 323.5,213.88 324.0,216.49 324.5,219.13 325.0,221.78 325.5,224.46 326.0,227.15 326.5,229.87 327.0,232.60 327.5,235.35 328.0,238.12 328.5,240.91 329.0,243.71 329.5,246.53 330.0,249.37 330.5,252.22 331.0,255.08 331.5,257.96 332.0,260.86 332.5,263.76 333.0,266.68 333.5,269.61 334.0,272.55 334.5,275.50 335.0,278.46 335.5,281.43 336.0,284.40 336.5,287.39 337.0,290.38 337.5,293.38 338.0,296.39 338.5,299.40 339.0,302.42 339.5,305.44 340.0,308.46 340.5,311.49 341.0,314.52 341.5,317.55 342.0,320.59 342.5,323.62 343.0,326.66 343.5,329.69 344.0,332.72 344.5,335.75 345.0,338.78 345.5,341.81 346.0,344.83 346.5,347.85 347.0,350.86 347.5,353.87 348.0,356.87 348.5,359.86 349.0,362.85 349.5,365.83 350.0,368.80 350.5,371.76 351.0,374.72 351.5,377.66 352.0,380.59 352.5,383.51 353.0,386.42 353.5,389.32 354.0,392.20 354.5,395.07 355.0,397.92 355.5,400.76 356.0,403.58 356.5,406.39 357.0,409.18 357.5,411.96 358.0,414.71 358.5,417.45 359.0,420.17 359.5,422.87 360.0,425.55 360.5,428.21 361.0,430.85 361.5,433.47 362.0,436.06 362.5,438.63 363.0,441.18 363.5,443.71 364.0,446.21 364.5,448.69 365.0,451.14 365.5,453.57 366.0,455.97 366.5,458.34 367.0,460.68 367.5,463.00 368.0,465.29 368.5,467.56 369.0,469.79 369.5,471.99 370.0,474.17 370.5,476.31 371.0,478.42 371.5,480.51 372.0,482.56 372.5,484.57 373.0,486.56 373.5,488.51 374.0,490.43 374.5,492.32 375.0,494.17 375.5,495.99 376.0,497.77 376.5,499.52 377.0,501.24 377.5,502.91 378.0,504.55 378.5,506.16 379.0,507.73 379.5,509.26 380.0,510.75 380.5,512.21 381.0,513.63 381.5,515.01 382.0,516.35 382.5,517.65 383.0,518.91 383.5,520.14 384.0,521.32 384.5,522.47 385.0,523.57 385.5,524.64 386.0,525.66 386.5,526.65 387.0,527.59 387.5,528.49 388.0,529.35 388.5,530.17 389.0,530.95 389.5,531.68 390.0,532.38 390.5,533.03 391.0,533.64 391.5,534.21 392.0,534.73 392.5,535.22 393.0,535.66 393.5,536.05 394.0,536.41 394.5,536.72 395.0,536.99 395.5,537.21 396.0,537.40 396.5,537.54 397.0,537.63 397.5,537.69 398.0,537.70 398.5,537.67 399.0,537.59 399.5,537.47 400.0,537.31 400.5,537.11 401.0,536.86 401.5,536.57 402.0,536.24 402.5,535.86 403.0,535.44 403.5,534.98 404.0,534.48 404.5,533.93 405.0,533.34 405.5,532.71 406.0,532.04 406.5,531.32 407.0,530.56 407.5,529.77 408.0,528.93 408.5,528.05 409.0,527.12 409.5,526.16 410.0,525.16 410.5,524.11 411.0,523.03 411.5,521.90 412.0,520.74 412.5,519.53 413.0,518.29 413.5,517.00 414.0,515.68 414.5,514.32 415.0,512.92 415.5,511.49 416.0,510.01 416.5,508.50 417.0,506.95 417.5,505.36 418.0,503.74 418.5,502.08 419.0,500.38 419.5,498.65 420.0,496.89 420.5,495.09 421.0,493.25 421.5,491.38 422.0,489.48 422.5,487.54 423.0,485.57 423.5,483.57 424.0,481.53 424.5,479.47 425.0,477.37 425.5,475.24 426.0,473.08 426.5,470.89 427.0,468.68 427.5,466.43 428.0,464.15 428.5,461.85 429.0,459.51 429.5,457.16 430.0,454.77 430.5,452.36 431.0,449.92 431.5,447.45 432.0,444.96 432.5,442.45 433.0,439.91 433.5,437.35 434.0,434.77 434.5,432.16 435.0,429.53 435.5,426.88 436.0,424.21 436.5,421.52 437.0,418.81 437.5,416.09 438.0,413.34 438.5,410.57 439.0,407.79 439.5,404.99 440.0,402.17 440.5,399.34 441.0,396.50 441.5,393.63 442.0,390.76 442.5,387.87 443.0,384.97 443.5,382.05 444.0,379.13 444.5,376.19 445.0,373.24 445.5,370.28 446.0,367.32 446.5,364.34 447.0,361.36 447.5,358.37 448.0,355.37 448.5,352.36 449.0,349.35 449.5,346.34 450.0,343.32 450.5,340.29 451.0,337.27 451.5,334.24 452.0,331.21 452.5,328.17 453.0,325.14 453.5,322.10 454.0,319.07 454.5,316.04 455.0,313.01 455.5,309.98 456.0,306.95 456.5,303.93 457.0,300.91 457.5,297.89 458.0,294.88 458.5,291.88 459.0,288.89 459.5,285.90 460.0,282.91 460.5,279.94 461.0,276.98 461.5,274.02 462.0,271.08 462.5,268.14 463.0,265.22 463.5,262.31 464.0,259.41 464.5,256.52 465.0,253.65 465.5,250.79 466.0,247.95 466.5,245.12 467.0,242.31 467.5,239.51 468.0,236.73 468.5,233.97 469.0,231.23 469.5,228.51 470.0,225.80 470.5,223.12 471.0,220.45 471.5,217.81 472.0,215.19 472.5,212.58 473.0,210.01 473.5,207.45 474.0,204.92 474.5,202.41 475.0,199.93 475.5,197.47 476.0,195.04 476.5,192.63 477.0,190.25 477.5,187.90 478.0,185.57 478.5,183.28 479.0,181.01 479.5,178.77 480.0,176.56 480.5,174.37 481.0,172.22 481.5,170.10 482.0,168.01 482.5,165.95 483.0,163.93 483.5,161.93 484.0,159.97 484.5,158.04 485.0,156.15 485.5,154.29 486.0,152.46 486.5,150.67 487.0,148.91 487.5,147.19 488.0,145.50 488.5,143.85 489.0,142.24 489.5,140.66 490.0,139.12 490.5,137.62 491.0,136.15 491.5,134.72 492.0,133.33 492.5,131.98 493.0,130.67 493.5,129.40 494.0,128.16 494.5,126.97 495.0,125.81 495.5,124.70 496.0,123.62 496.5,122.59 497.0,121.60 497.5,120.64 498.0,119.73 498.5,118.86 499.0,118.03 499.5,117.24 500.0,116.50 500.5,115.79 501.0,115.13 501.5,114.51 502.0,113.93 502.5,113.39 503.0,112.90 503.5,112.45 504.0,112.04 504.5,111.68 505.0,111.35 505.5,111.08 506.0,110.84 506.5,110.64 507.0,110.49 507.5,110.39 508.0,110.32 508.5,110.30 509.0,110.32 509.5,110.39 510.0,110.49 510.5,110.64 511.0,110.84 511.5,111.08 512.0,111.35 512.5,111.68 513.0,112.04 513.5,112.45 514.0,112.90 514.5,113.39 515.0,113.93 515.5,114.51 516.0,115.13 516.5,115.79 517.0,116.50 517.5,117.24 518.0,118.03 518.5,118.86 519.0,119.73 519.5,120.64 520.0,121.60 520.5,122.59 521.0,123.62 521.5,124.70 522.0,125.81 522.5,126.97 523.0,128.16 523.5,129.40 524.0,130.67 524.5,131.98 525.0,133.33 525.5,134.72 526.0,136.15 526.5,137.62 527.0,139.12 527.5,140.66 528.0,142.24 528.5,143.85 529.0,145.50 529.5,147.19 530.0,148.91 530.5,150.67 531.0,152.46 531.5,154.29 532.0,156.15 532.5,158.04 533.0,159.97 533.5,161.93 534.0,163.93 534.5,165.95 535.0,168.01 535.5,170.10 536.0,172.22 536.5,174.37 537.0,176.56 537.5,178.77 538.0,181.01 538.5,183.28 539.0,185.57 539.5,187.90 540.0,190.25 540.5,192.63 541.0,195.04 541.5,197.47 542.0,199.93 542.5,202.41 543.0,204.92 543.5,207.45 544.0,210.01 544.5,212.58 545.0,215.19 545.5,217.81 546.0,220.45 546.5,223.12 547.0,225.80 547.5,228.51 548.0,231.23 548.5,233.97 549.0,236.73 549.5,239.51 550.0,242.31 550.5,245.12 551.0,247.95 551.5,250.79 552.0,253.65 552.5,256.52 553.0,259.41 553.5,262.31 554.0,265.22 554.5,268.14 555.0,271.08 555.5,274.02 556.0,276.98 556.5,279.94 557.0,282.91 557.5,285.90 558.0,288.89 558.5,291.88 559.0,294.88 559.5,297.89 560.0,300.91 560.5,303.93 561.0,306.95 561.5,309.98 562.0,313.01 562.5,316.04 563.0,319.07 563.5,322.10 564.0,325.14 564.5,328.17 565.0,331.21 565.5,334.24 566.0,337.27 566.5,340.29 567.0,343.32 567.5,346.34 568.0,349.35 568.5,352.36 569.0,355.37 569.5,358.37 570.0,361.36 570.5,364.34 571.0,367.32 571.5,370.28 572.0,373.24 572.5,376.19 573.0,379.13 573.5,382.05 574.0,384.97 574.5,387.87 575.0,390.76 575.5,393.63 576.0,396.50 576.5,399.34 577.0,402.17 577.5,404.99 578.0,407.79 578.5,410.57 579.0,413.34 579.5,416.09 580.0,418.81 580.5,421.52 581.0,424.21 581.5,426.88 582.0,429.53 582.5,432.16 583.0,434.77 583.5,437.35 584.0,439.91 584.5,442.45 585.0,444.96 585.5,447.45 586.0,449.92 586.5,452.36 587.0,454.77 587.5,457.16 588.0,459.51 588.5,461.85 589.0,464.15 589.5,466.43 590.0,468.68 590.5,470.89 591.0,473.08 591.5,475.24 592.0,477.37 592.5,479.47 593.0,481.53 593.5,483.57 594.0,485.57 594.5,487.54 595.0,489.48 595.5,491.38 596.0,493.25 596.5,495.09 597.0,496.89 597.5,498.65 598.0,500.38 598.5,502.08 599.0,503.74 599.5,505.36 600.0,506.95 600.5,508.50 601.0,510.01 601.5,511.49 602.0,512.92 602.5,514.32 603.0,515.68 603.5,517.00 604.0,518.29 604.5,519.53 605.0,520.74 605.5,521.90 606.0,523.03 606.5,524.11 607.0,525.16 607.5,526.16 608.0,527.12 608.5,528.05 609.0,528.93 609.5,529.77 610.0,530.56 610.5,531.32 611.0,532.04 611.5,532.71 612.0,533.34 612.5,533.93 613.0,534.48 613.5,534.98 614.0,535.44 614.5,535.86 615.0,536.24 615.5,536.57 616.0,536.86 616.5,537.11 617.0,537.31 617.5,537.47 618.0,537.59 618.5,537.67 619.0,537.70 619.5,537.69 620.0,537.63 620.5,537.54 621.0,537.40 621.5,537.21 622.0,536.99 622.5,536.72 623.0,536.41 623.5,536.05 624.0,535.66 624.5,535.22 625.0,534.73 625.5,534.21 626.0,533.64 626.5,533.03 627.0,532.38 627.5,531.68 628.0,530.95 628.5,530.17 629.0,529.35 629.5,528.49 630.0,527.59 630.5,526.65 631.0,525.66 631.5,524.64 632.0,523.57 632.5,522.47 633.0,521.32 633.5,520.14 634.0,518.91 634.5,517.65 635.0,516.35 635.5,515.01 636.0,513.63 636.5,512.21 637.0,510.75 637.5,509.26 638.0,507.73 638.5,506.16 639.0,504.55 639.5,502.91 640.0,501.24 640.5,499.52 641.0,497.77 641.5,495.99 642.0,494.17 642.5,492.32 643.0,490.43 643.5,488.51 644.0,486.56 644.5,484.57 645.0,482.56 645.5,480.51 646.0,478.42 646.5,476.31 647.0,474.17 647.5,471.99 648.0,469.79 648.5,467.56 649.0,465.29 649.5,463.00 650.0,460.68 650.5,458.34 651.0,455.97 651.5,453.57 652.0,451.14 652.5,448.69 653.0,446.21 653.5,443.71 654.0,441.18 654.5,438.63 655.0,436.06 655.5,433.47 656.0,430.85 656.5,428.21 657.0,425.55 657.5,422.87 658.0,420.17 658.5,417.45 659.0,414.71 659.5,411.96 660.0,409.18 660.5,406.39 661.0,403.58 661.5,400.76 662.0,397.92 662.5,395.07 663.0,392.20 663.5,389.32 664.0,386.42 664.5,383.51 665.0,380.59 665.5,377.66 666.0,374.72 666.5,371.76 667.0,368.80 667.5,365.83 668.0,362.85 668.5,359.86 669.0,356.87 669.5,353.87 670.0,350.86 670.5,347.85 671.0,344.83 671.5,341.81 672.0,338.78 672.5,335.75 673.0,332.72 673.5,329.69 674.0,326.66 674.5,323.62 675.0,320.59 675.5,317.55 676.0,314.52 676.5,311.49 677.0,308.46 677.5,305.44 678.0,302.42 678.5,299.40 679.0,296.39 679.5,293.38 680.0,290.38 680.5,287.39 681.0,284.40 681.5,281.43 682.0,278.46 682.5,275.50 683.0,272.55 683.5,269.61 684.0,266.68 684.5,263.76 685.0,260.86 685.5,257.96 686.0,255.08 686.5,252.22 687.0,249.37 687.5,246.53 688.0,243.71 688.5,240.91 689.0,238.12 689.5,235.35 690.0,232.60 690.5,229.87 691.0,227.15 691.5,224.46 692.0,221.78 692.5,219.13 693.0,216.49 693.5,213.88 694.0,211.29 694.5,208.73 695.0,206.18 695.5,203.66 696.0,201.17 696.5,198.70 697.0,196.25 697.5,193.83 698.0,191.44 698.5,189.07 699.0,186.73 699.5,184.42 700.0,182.14 700.5,179.88 701.0,177.66 701.5,175.46 702.0,173.29 702.5,171.16 703.0,169.05 703.5,166.98 704.0,164.94 704.5,162.93 705.0,160.95 705.5,159.00 706.0,157.09 706.5,155.21 707.0,153.37 707.5,151.56 708.0,149.79 708.5,148.05 709.0,146.34 709.5,144.67 710.0,143.04 710.5,141.44 711.0,139.89 711.5,138.36 712.0,136.88 712.5,135.43 713.0,134.02 713.5,132.65 714.0,131.32 714.5,130.03 715.0,128.78 715.5,127.56 716.0,126.39 716.5,125.25 717.0,124.16 717.5,123.10 718.0,122.09 718.5,121.11 719.0,120.18 719.5,119.29 720.0,118.44 720.5,117.63 721.0,116.86 721.5,116.14 722.0,115.45 722.5,114.81 723.0,114.21 723.5,113.66 724.0,113.14 724.5,112.67 725.0,112.24 725.5,111.85 726.0,111.51 726.5,111.21 727.0,110.95 727.5,110.74 728.0,110.56 728.5,110.43 729.0,110.35 729.5,110.31 730.0,110.31 730.5,110.35 731.0,110.43 731.5,110.56 732.0,110.74 732.5,110.95 733.0,111.21 733.5,111.51 734.0,111.85 734.5,112.24 735.0,112.67 735.5,113.14 736.0,113.66 736.5,114.21 737.0,114.81 737.5,115.45 738.0,116.14 738.5,116.86 739.0,117.63 739.5,118.44 740.0,119.29 740.5,120.18 741.0,121.11 741.5,122.09 742.0,123.10 742.5,124.16 743.0,125.25 743.5,126.39 744.0,127.56 744.5,128.78 745.0,130.03 745.5,131.32 746.0,132.65 746.5,134.02 747.0,135.43 747.5,136.88 748.0,138.36 748.5,139.89 749.0,141.44 749.5,143.04 750.0,144.67 750.5,146.34 751.0,148.05 751.5,149.79 752.0,151.56 752.5,153.37 753.0,155.21 753.5,157.09 754.0,159.00 754.5,160.95 755.0,162.93 755.5,164.94 756.0,166.98 756.5,169.05 757.0,171.16 757.5,173.29 758.0,175.46 758.5,177.66 759.0,179.88 759.5,182.14 760.0,184.42 760.5,186.73 761.0,189.07 761.5,191.44 762.0,193.83 762.5,196.25 763.0,198.70 763.5,201.17 764.0,203.66 764.5,206.18 765.0,208.73 765.5,211.29 766.0,213.88 766.5,216.49 767.0,219.13 767.5,221.78 768.0,224.46 768.5,227.15 769.0,229.87 769.5,232.60 770.0,235.35 770.5,238.12 771.0,240.91 771.5,243.71 772.0,246.53 772.5,249.37 773.0,252.22 773.5,255.08 774.0,257.96 774.5,260.86 775.0,263.76 775.5,266.68 776.0,269.61 776.5,272.55 777.0,275.50 777.5,278.46 778.0,281.43 778.5,284.40 779.0,287.39 779.5,290.38 780.0,293.38 780.5,296.39 781.0,299.40 781.5,302.42 782.0,305.44 782.5,308.46 783.0,311.49 783.5,314.52 784.0,317.55 784.5,320.59 785.0,323.62 785.5,326.66 786.0,329.69 786.5,332.72 787.0,335.75 787.5,338.78 788.0,341.81 788.5,344.83 789.0,347.85 789.5,350.86 790.0,353.87 790.5,356.87 791.0,359.86 791.5,362.85 792.0,365.83 792.5,368.80 793.0,371.76 793.5,374.72 794.0,377.66 794.5,380.59 795.0,383.51 795.5,386.42 796.0,389.32 796.5,392.20 797.0,395.07 797.5,397.92 798.0,400.76 798.5,403.58 799.0,406.39 799.5,409.18 800.0,411.96 800.5,414.71 801.0,417.45 801.5,420.17 802.0,422.87 802.5,425.55 803.0,428.21 803.5,430.85 804.0,433.47 804.5,436.06 805.0,438.63 805.5,441.18 806.0,443.71 806.5,446.21 807.0,448.69 807.5,451.14 808.0,453.57 808.5,455.97 809.0,458.34 809.5,460.68 810.0,463.00 810.5,465.29 811.0,467.56 811.5,469.79 812.0,471.99 812.5,474.17 813.0,476.31 813.5,478.42 814.0,480.51 814.5,482.56 815.0,484.57 815.5,486.56 816.0,488.51 816.5,490.43 817.0,492.32 817.5,494.17 818.0,495.99 818.5,497.77 819.0,499.52 819.5,501.24 820.0,502.91 820.5,504.55 821.0,506.16 821.5,507.73 822.0,509.26 822.5,510.75 823.0,512.21 823.5,513.63 824.0,515.01 824.5,516.35 825.0,517.65 825.5,518.91 826.0,520.14 826.5,521.32 827.0,522.47 827.5,523.57 828.0,524.64 828.5,525.66 829.0,526.65 829.5,527.59 830.0,528.49 830.5,529.35 831.0,530.17 831.5,530.95 832.0,531.68 832.5,532.38 833.0,533.03 833.5,533.64 834.0,534.21 834.5,534.73 835.0,535.22 835.5,535.66 836.0,536.05 836.5,536.41 837.0,536.72 837.5,536.99 838.0,537.21 838.5,537.40 839.0,537.54 839.5,537.63 840.0,537.69 840.5,537.70 841.0,537.67 841.5,537.59 842.0,537.47 842.5,537.31 843.0,537.11 843.5,536.86 844.0,536.57 844.5,536.24 845.0,535.86 845.5,535.44 846.0,534.98 846.5,534.48 847.0,533.93 847.5,533.34 848.0,532.71 848.5,532.04 849.0,531.32 849.5,530.56 850.0,529.77 850.5,528.93 851.0,528.05 851.5,527.12 852.0,526.16 852.5,525.16 853.0,524.11 853.5,523.03 854.0,521.90 854.5,520.74 855.0,519.53 855.5,518.29 856.0,517.00 856.5,515.68 857.0,514.32 857.5,512.92 858.0,511.49 858.5,510.01 859.0,508.50 859.5,506.95 860.0,505.36 860.5,503.74 861.0,502.08 861.5,500.38 862.0,498.65 862.5,496.89 863.0,495.09 863.5,493.25 864.0,491.38 864.5,489.48 865.0,487.54 865.5,485.57 866.0,483.57 866.5,481.53 867.0,479.47 867.5,477.37 868.0,475.24 868.5,473.08 869.0,470.89 869.5,468.68 870.0,466.43 870.5,464.15 871.0,461.85 871.5,459.51 872.0,457.16 872.5,454.77 873.0,452.36 873.5,449.92 874.0,447.45 874.5,444.96 875.0,442.45 875.5,439.91 876.0,437.35 876.5,434.77 877.0,432.16 877.5,429.53 878.0,426.88 878.5,424.21 879.0,421.52 879.5,418.81 880.0,416.09 880.5,413.34 881.0,410.57 881.5,407.79 882.0,404.99 882.5,402.17 883.0,399.34 883.5,396.50 884.0,393.63 884.5,390.76 885.0,387.87 885.5,384.97 886.0,382.05 886.5,379.13 887.0,376.19 887.5,373.24 888.0,370.28 888.5,367.32 889.0,364.34 889.5,361.36 890.0,358.37 890.5,355.37 891.0,352.36 891.5,349.35 892.0,346.34 892.5,343.32 893.0,340.29 893.5,337.27 894.0,334.24 894.5,331.21 895.0,328.17 895.5,325.14 896.0,322.10 896.5,319.07 897.0,316.04" fill="none" stroke="#f0e21a" stroke-width="1.2"/>
<path d="M445.7,63 L462,63 L454,70.5 Z" fill="#f08a24"/>
<g stroke="#f08a24" stroke-width="1.6" fill="#000">
<path d="M447,72 H461.5 V88 H457 L454.2,93.5 L451.5,88 H447 Z"/>
</g>
<text x="454.3" y="85.3" font-size="13.5" fill="#f4f4f4" stroke="#f4f4f4" stroke-width="0.7" text-anchor="middle">T</text>
<path d="M15,310.8 H36 L46.3,321.8 L36,333 H15 Z" fill="#f8e82e" stroke="#1b3a3a" stroke-width="0.6"/>
<text x="30" y="325.8" font-size="10" fill="#222" stroke="#222" stroke-width="0.35" text-anchor="middle" letter-spacing="0.5">C 1</text>
<text x="891.2" y="326.6" class="vl" style="font-size:10.5px">0 V</text>
<path d="M878.7,321 L888.3,313 L888.3,318.8 L896,318.8 L896,323 L888.3,323 L888.3,328.8 Z" fill="#f5e62a"/>
</g>
<g fill="#c8c8c8"><circle cx="905.3" cy="306.2" r="1.1"/><circle cx="905.3" cy="311" r="1.1"/><circle cx="905.3" cy="315.8" r="1.1"/></g>
</svg>

<!-- right panel -->
<div class="a" style="left:911px;top:38px;width:139px;height:545.6px;border-left:1px solid #5a5550;border-top:1px solid #5a5550;border-bottom:1px solid #5a5550"></div>
<div class="btn" style="left:918px;top:47px;width:58.5px;height:34px"></div>
<div class="btn" style="left:984.5px;top:47px;width:58px;height:34px"></div>
<div class="btn" style="left:918px;top:89.5px;width:58.5px;height:34px"></div>
<div class="btn" style="left:984.5px;top:89.5px;width:58px;height:34px"></div>
<div class="sep" style="left:914px;top:131px;width:133px;height:1px;background:#5a5550"></div>
<div class="btn" style="left:918px;top:137px;width:58.5px;height:34px"></div>
<div class="btn" style="left:984.5px;top:137px;width:58px;height:34px"></div>
<div class="sep" style="left:914px;top:178px;width:133px;height:1px;background:#5a5550"></div>
<svg class="a" style="left:930px;top:140px" width="32" height="28" viewBox="0 0 32 28">
<rect x="7.5" y="4.4" width="18" height="15.6" fill="none" stroke="#bbb" stroke-width="1.4" stroke-dasharray="2 2"/>
<circle cx="17.5" cy="11" r="3.6" fill="none" stroke="#bbb" stroke-width="1.4"/>
<path d="M15,13.5 L11,17" stroke="#bbb" stroke-width="2"/>
<path d="M21.5,16 L28,21.5 L25,22 L27,25 L25.5,26 L23.5,23 L21.5,25 Z" fill="#bbb"/>
</svg>

<div class="meas" style="top:189.2px;height:53.7px"><div class="mh"></div></div>
<div class="meas" style="top:248.3px;height:53.4px"><div class="mh"></div></div>
<div class="meas" style="top:307.3px;height:53.4px"><div class="mh"></div></div>
<div class="meas" style="top:366.2px;height:53.7px;background:linear-gradient(#000 0,#000 16.3px,#c4c4c4 16.3px,#c4c4c4 17.4px,#a9a9a9 17.4px,#a9a9a9 18.6px,#c9c9c9 18.6px)"><div class="mh"></div></div>
<svg class="a" style="left:990px;top:185px" width="60" height="200" viewBox="990 185 60 200">
<g stroke="#3c3a2a" stroke-width="0.8">
<rect x="1021.4" y="193.1" width="19.9" height="10.4" rx="5.2" fill="#f5ec2c"/>
<rect x="1021.4" y="252.1" width="19.9" height="10.4" rx="5.2" fill="#f5ec2c"/>
<rect x="1021.4" y="310.7" width="19.9" height="10.4" rx="5.2" fill="#22c8d6" stroke="#1c3a3a"/>
</g>
<path d="M999.1,369.7 H1022.2 L1015.4,380.6 H999.1 A5.45,5.45 0 0 1 999.1,369.7 Z" fill="#22c8d6"/>
<path d="M1023.6,369.7 H1035.8 A5.45,5.45 0 0 1 1035.8,380.6 H1016.8 Z" fill="#f5ec2c"/>
<g font-family="Liberation Sans" font-size="9.5" fill="#1a1a1a" text-anchor="middle">
<text x="1031.4" y="202.3">1</text>
<text x="1031.4" y="261.3">1</text>
<text x="1031.4" y="319.9">2</text>
<text x="1003.2" y="379.2">2</text>
<text x="1030.4" y="379.2">1</text>
</g>
</svg>

<!-- bottom bar -->
<div class="chb" style="left:11.3px;top:586px;width:82.4px"><div class="chh" style="background:#f8ec30"></div></div>
<div class="chb" style="left:96.1px;top:586px;width:81.6px"><div class="chh" style="background:#1d4242"></div></div>

<div class="btn" style="left:478px;top:586px;width:39.5px;height:70px"></div>
<div class="a" style="left:483px;top:593px;width:30px;height:2.8px;border-radius:1.4px;background:#e8405a"></div>
<div class="btn" style="left:522px;top:586px;width:40px;height:70px"></div>
<div class="a" style="left:527.5px;top:593px;width:30px;height:2.8px;border-radius:1.4px;background:#8cd024"></div>
<div class="sep" style="left:567px;top:588px;width:1px;height:66px"></div>
<div class="btn" style="left:572.5px;top:586px;width:39.5px;height:70px"></div>
<div class="sep" style="left:616px;top:588px;width:1px;height:66px"></div>
<div class="sep" style="left:625px;top:588px;width:1px;height:66px"></div>
<div class="t" style="left:478px;width:39.5px;text-align:center;top:617px;font-size:17px;line-height:17px;color:#e8e8e8">3</div>
<div class="t" style="left:522px;width:40px;text-align:center;top:617px;font-size:17px;line-height:17px;color:#e8e8e8">4</div>
<div class="t" style="left:572.5px;width:39.5px;text-align:center;top:603.6px;font-size:12.5px;line-height:14.05px;letter-spacing:0.6px;color:#e8e8e8;white-space:normal">Math<br>Ref<br>Bus</div>

<div class="chb" style="left:630.8px;top:586.9px;width:100px;height:68.6px;background:linear-gradient(#575757 0,#575757 15.4px,#c4c4c4 15.4px,#c4c4c4 16.6px,#a9a9a9 16.6px,#a9a9a9 18px,#c9c9c9 18px)"></div>
<div class="chb" style="left:735px;top:586.9px;width:103.5px;height:68.6px;background:linear-gradient(#575757 0,#575757 15.4px,#c4c4c4 15.4px,#c4c4c4 16.6px,#a9a9a9 16.6px,#a9a9a9 18px,#c9c9c9 18px)"></div>
<div class="chb" style="left:842px;top:586.9px;width:109px;height:68.6px;background:linear-gradient(#575757 0,#575757 15.4px,#c4c4c4 15.4px,#c4c4c4 16.6px,#a9a9a9 16.6px,#a9a9a9 18px,#c9c9c9 18px)"></div>
<div class="a" style="left:916.6px;top:589px;width:26.4px;height:13.6px;border-radius:3.5px;background:#f5ec2c;box-shadow:0 0 0 0.8px #3c3a2a;color:#222;font-size:12px;line-height:13.6px;text-align:center">1</div>
<svg class="a" style="left:844px;top:606px" width="20" height="14"><path d="M1.5,11.5 H4.5 L10,2.5 H15.5" fill="none" stroke="#5a48a0" stroke-width="1.3"/></svg>
<div class="sep" style="left:956px;top:586px;width:1px;height:70px"></div>
<div class="a" style="left:962px;top:589px;width:80.7px;height:28px;background:#12cc12;border-radius:4px"></div>
<svg class="a" style="left:0;top:0" width="1056" height="40" viewBox="0 0 1056 40">
<g fill="#fff" stroke="#fff" stroke-width="0.35" font-family="Liberation Sans" font-weight="bold" font-size="25">
<text x="940.3" y="28.8">T</text>
<text x="949.3" y="28.8">e</text>
<rect x="965" y="11.5" width="4.2" height="17.3"/>
<path d="M969,22.5 L972,20 L977.2,28.8 L971.8,28.8 Z"/>
<text x="976.6" y="28.8" letter-spacing="-1.6">tronix</text>
</g>
<path d="M964.8,28.8 L970.2,28.8 L977.8,15.7 L974.6,15.7 Z" fill="#1cb8d8"/>
</svg>
<div class="t" style="left:27.20px;top:12.40px;font-size:14px;line-height:14px;letter-spacing:0.15px;color:#ececec;-webkit-text-stroke:0.5px #ececec">File</div>
<div class="t" style="left:88.00px;top:12.40px;font-size:14px;line-height:14px;letter-spacing:0.8px;color:#ececec;-webkit-text-stroke:0.5px #ececec">Edit</div>
<div class="t" style="left:152.00px;top:12.40px;font-size:14px;line-height:14px;letter-spacing:1.2px;color:#ececec;-webkit-text-stroke:0.5px #ececec">Utility</div>
<div class="t" style="left:230.00px;top:12.40px;font-size:14px;line-height:14px;letter-spacing:1.0px;color:#ececec;-webkit-text-stroke:0.5px #ececec">Help</div>
<div class="t" style="left:635.00px;top:12.40px;font-size:14px;line-height:14px;letter-spacing:0.0px;color:#ececec;-webkit-text-stroke:0.5px #ececec">Average (128): 615 Acqs</div>
<div class="t" style="left:23.40px;top:43.95px;font-size:14px;line-height:14px;letter-spacing:1.0px;color:#e8e8e8;-webkit-text-stroke:0.5px #e8e8e8">Waveform View</div>
<div class="t" style="left:923.60px;top:56.13px;font-size:13.2px;line-height:13.2px;letter-spacing:0.05px;color:#e6e6e6;-webkit-text-stroke:0.5px #e6e6e6">Cursors</div>
<div class="t" style="left:990.80px;top:56.13px;font-size:13.2px;line-height:13.2px;letter-spacing:0.55px;color:#e6e6e6;-webkit-text-stroke:0.5px #e6e6e6">Callout</div>
<div class="t" style="left:920.00px;top:98.23px;font-size:13.2px;line-height:13.2px;letter-spacing:0.5px;color:#f4f4f4;-webkit-text-stroke:0.4px #f4f4f4">Measure</div>
<div class="t" style="left:992.80px;top:98.23px;font-size:13.2px;line-height:13.2px;letter-spacing:0.1px;color:#f4f4f4;-webkit-text-stroke:0.4px #f4f4f4">Search</div>
<div class="t" style="left:991.10px;top:145.63px;font-size:13.2px;line-height:13.2px;letter-spacing:0.7px;color:#ececec;-webkit-text-stroke:0.45px #ececec">More...</div>
<div class="t" style="left:919.50px;top:190.80px;font-size:13px;line-height:13px;letter-spacing:0.4px;color:#f2f2f2;-webkit-text-stroke:0.35px #f2f2f2">Meas 1</div>
<div class="t" style="left:919.50px;top:208.87px;font-size:12.2px;line-height:12.2px;letter-spacing:0.3px;color:#202020;-webkit-text-stroke:0.1px #202020">Frequency</div>
<div class="t" style="left:919.50px;top:225.67px;font-size:12.2px;line-height:12.2px;letter-spacing:0.7px;color:#202020;-webkit-text-stroke:0.1px #202020">&micro;': 10.00 kHz</div>
<div class="t" style="left:919.50px;top:249.90px;font-size:13px;line-height:13px;letter-spacing:0.4px;color:#f2f2f2;-webkit-text-stroke:0.35px #f2f2f2">Meas 2</div>
<div class="t" style="left:919.50px;top:267.17px;font-size:12.2px;line-height:12.2px;letter-spacing:0.5px;color:#202020;-webkit-text-stroke:0.1px #202020">Amplitude</div>
<div class="t" style="left:919.50px;top:284.37px;font-size:12.2px;line-height:12.2px;letter-spacing:0.6px;color:#202020;-webkit-text-stroke:0.1px #202020">&micro;': 1.906 V</div>
<div class="t" style="left:919.50px;top:308.60px;font-size:13px;line-height:13px;letter-spacing:0.4px;color:#f2f2f2;-webkit-text-stroke:0.35px #f2f2f2">Meas 3</div>
<div class="t" style="left:919.50px;top:327.17px;font-size:12.2px;line-height:12.2px;letter-spacing:0.5px;color:#202020;-webkit-text-stroke:0.1px #202020">Amplitude</div>
<div class="t" style="left:919.50px;top:343.97px;font-size:12.2px;line-height:12.2px;letter-spacing:0.6px;color:#202020;-webkit-text-stroke:0.1px #202020">&micro;': 1.030 V</div>
<div class="t" style="left:919.50px;top:367.20px;font-size:13px;line-height:13px;letter-spacing:0.4px;color:#22c8d8;-webkit-text-stroke:0.4px #22c8d8">Meas 4</div>
<div class="t" style="left:919.50px;top:385.47px;font-size:12.2px;line-height:12.2px;letter-spacing:0.3px;color:#202020;-webkit-text-stroke:0.1px #202020">Phase</div>
<div class="t" style="left:919.50px;top:402.67px;font-size:12.2px;line-height:12.2px;letter-spacing:0.6px;color:#202020;-webkit-text-stroke:0.1px #202020">&micro;': 55.83 Deg</div>
<div class="t" style="left:16.40px;top:587.99px;font-size:12.3px;line-height:12.3px;letter-spacing:0.2px;color:#1a1a1a;-webkit-text-stroke:0.4px #1a1a1a">Ch 1</div>
<div class="t" style="left:16.40px;top:605.39px;font-size:12.3px;line-height:12.3px;letter-spacing:0.65px;color:#282828;-webkit-text-stroke:0.1px #282828">230 mV/div</div>
<div class="t" style="left:16.40px;top:622.59px;font-size:12.3px;line-height:12.3px;letter-spacing:0.5px;color:#282828;-webkit-text-stroke:0.1px #282828">10 X</div>
<div class="t" style="left:16.40px;top:640.49px;font-size:12.3px;line-height:12.3px;letter-spacing:0.6px;color:#282828;-webkit-text-stroke:0.1px #282828">500 MHz</div>
<div class="t" style="left:101.00px;top:587.99px;font-size:12.3px;line-height:12.3px;letter-spacing:0.2px;color:#24c8d8;-webkit-text-stroke:0.4px #24c8d8">Ch 2</div>
<div class="t" style="left:101.00px;top:605.39px;font-size:12.3px;line-height:12.3px;letter-spacing:0.65px;color:#282828;-webkit-text-stroke:0.1px #282828">130 mV/div</div>
<div class="t" style="left:101.00px;top:622.59px;font-size:12.3px;line-height:12.3px;letter-spacing:0.5px;color:#282828;-webkit-text-stroke:0.1px #282828">10 X</div>
<div class="t" style="left:101.00px;top:640.49px;font-size:12.3px;line-height:12.3px;letter-spacing:0.6px;color:#282828;-webkit-text-stroke:0.1px #282828">500 MHz</div>
<div class="t" style="left:635.80px;top:588.02px;font-size:12.5px;line-height:12.5px;letter-spacing:0.2px;color:#f0f0f0;-webkit-text-stroke:0.35px #f0f0f0">AFG</div>
<div class="t" style="left:635.00px;top:605.89px;font-size:12.3px;line-height:12.3px;letter-spacing:0.2px;color:#282828;-webkit-text-stroke:0.1px #282828">Sine</div>
<div class="t" style="left:635.00px;top:622.99px;font-size:12.3px;line-height:12.3px;letter-spacing:0.4px;color:#282828;-webkit-text-stroke:0.1px #282828">10 kHz</div>
<div class="t" style="left:635.00px;top:640.79px;font-size:12.3px;line-height:12.3px;letter-spacing:0.5px;color:#282828;-webkit-text-stroke:0.1px #282828">1 Vpp</div>
<div class="t" style="left:740.00px;top:588.02px;font-size:12.5px;line-height:12.5px;letter-spacing:1.2px;color:#f0f0f0;-webkit-text-stroke:0.35px #f0f0f0">Horizontal</div>
<div class="t" style="left:740.00px;top:605.89px;font-size:12.3px;line-height:12.3px;letter-spacing:0.2px;color:#282828;-webkit-text-stroke:0.1px #282828">40 &micro;s/div</div>
<div class="t" style="left:740.00px;top:622.99px;font-size:12.3px;line-height:12.3px;letter-spacing:0.0px;color:#282828;-webkit-text-stroke:0.1px #282828">SR: 625 MS/s</div>
<div class="t" style="left:740.00px;top:640.79px;font-size:12.3px;line-height:12.3px;letter-spacing:0.2px;color:#282828;-webkit-text-stroke:0.1px #282828">RL: 250 kpts</div>
<div class="t" style="left:846.50px;top:588.02px;font-size:12.5px;line-height:12.5px;letter-spacing:0.5px;color:#f0f0f0;-webkit-text-stroke:0.35px #f0f0f0">Trigger</div>
<div class="t" style="left:868.40px;top:605.79px;font-size:12.3px;line-height:12.3px;letter-spacing:0.7px;color:#282828;-webkit-text-stroke:0.1px #282828">9.2 mV</div>
<div class="t" style="left:972.80px;top:596.14px;font-size:12px;line-height:12px;letter-spacing:0.45px;color:#ffffff;font-weight:bold;-webkit-text-stroke:0.35px #fff">Triggered</div>
</body></html>
